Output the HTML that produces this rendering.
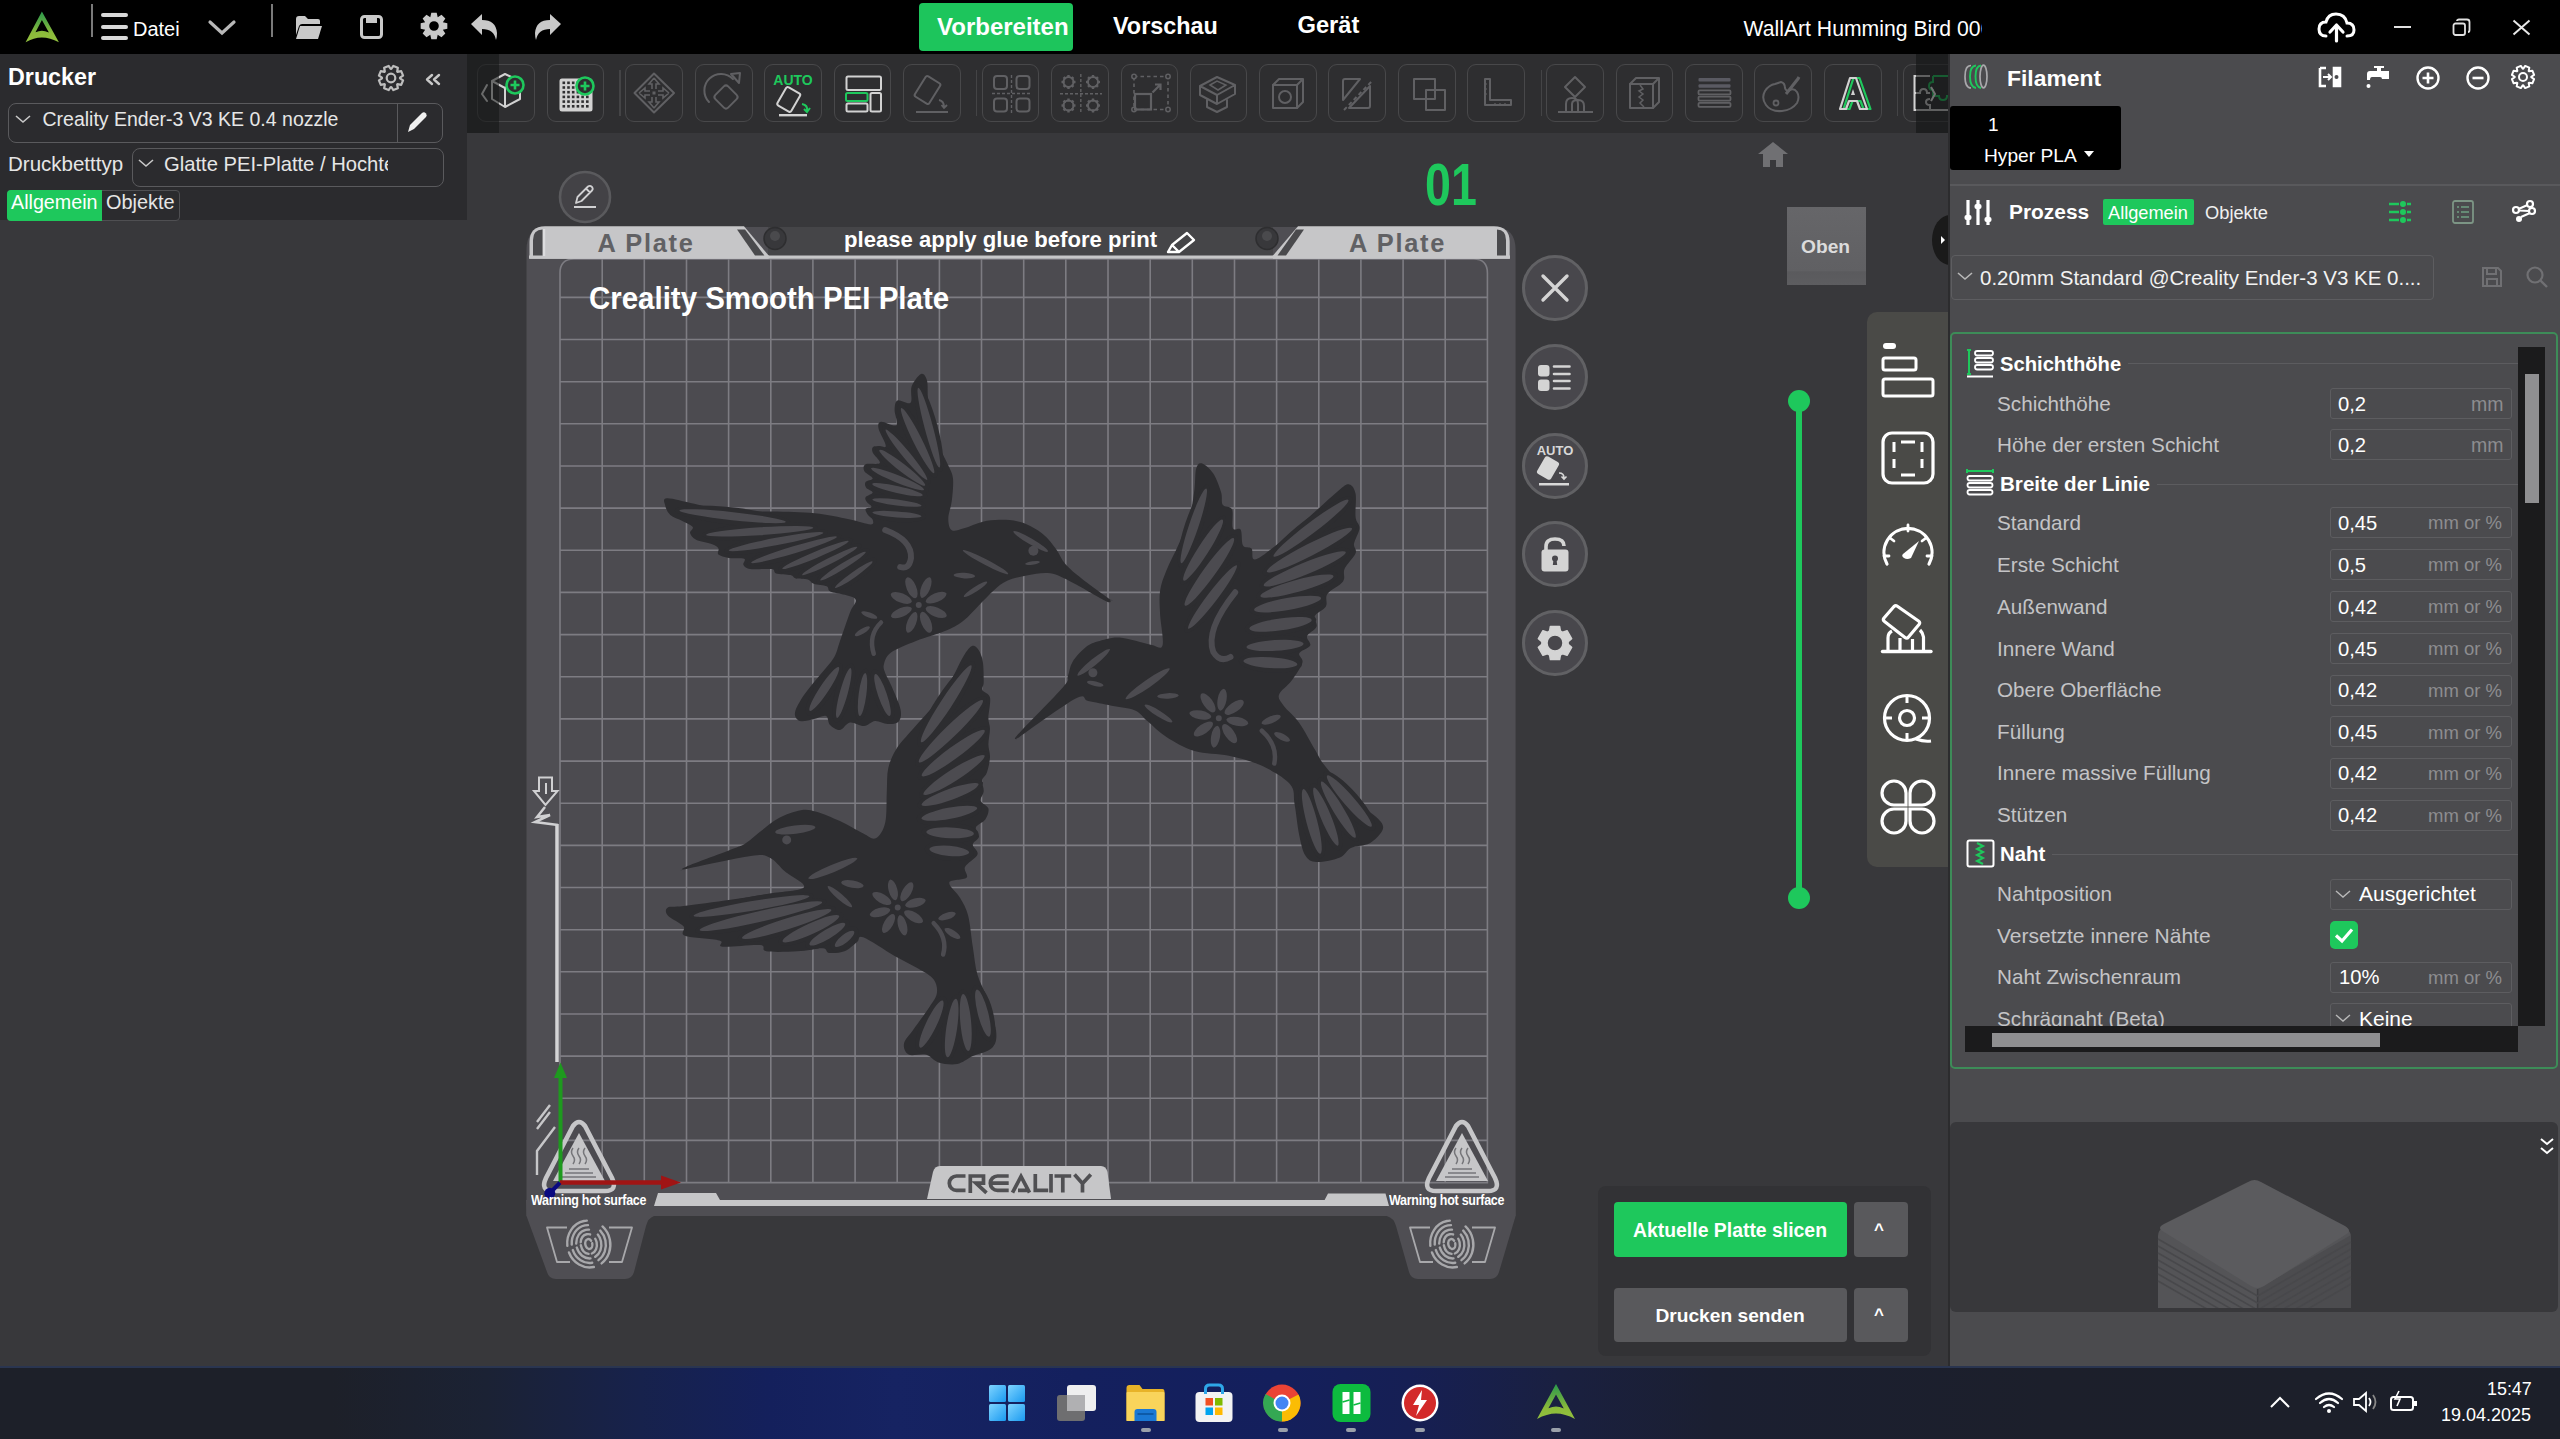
<!DOCTYPE html>
<html><head><meta charset="utf-8"><style>
html,body{margin:0;padding:0;width:2560px;height:1439px;overflow:hidden;background:#38383b;}
body{position:relative;font-family:"Liberation Sans",sans-serif;}
.t{position:absolute;white-space:nowrap;}
.r{position:absolute;box-sizing:border-box;}
.s{position:absolute;overflow:visible;}
</style></head><body>
<div class="r" style="left:0px;top:0px;width:2560px;height:54px;background:#000;"></div>
<div class="r" style="left:0px;top:54px;width:467px;height:166px;background:#2b2b2e;"></div>
<div class="r" style="left:467px;top:54px;width:1481px;height:79px;background:#2e2e30;"></div>
<div class="r" style="left:1948px;top:54px;width:612px;height:1312px;background:#4b4b4e;"></div>
<div class="r" style="left:0px;top:1366px;width:2560px;height:73px;background:linear-gradient(90deg,#1d2029 0%,#1d2029 13%,#1b2234 19%,#17224c 25%,#14205c 30%,#162362 35%,#14205e 42%,#141f5c 50%,#161f54 55%,#1a2040 61%,#1b1f31 67%,#1c1f2b 80%,#1c1f29 100%);"></div>
<div class="r" style="left:0px;top:1366px;width:2560px;height:2px;background:#2a3550;"></div>
<svg class="s" style="left:20px;top:8px;" width="44" height="38" viewBox="0 0 44 38"><defs><linearGradient id="lg1" x1="0" y1="0" x2="0" y2="1"><stop offset="0" stop-color="#2a9a4c"/><stop offset="0.35" stop-color="#5aa844"/><stop offset="0.7" stop-color="#8cbb3a"/><stop offset="1" stop-color="#92c03f"/></linearGradient></defs>
<path fill="url(#lg1)" fill-rule="evenodd" d="M21.9,3.5 L38.9,34.2 Q30,29.5 21.9,29.5 Q13.8,29.5 5.6,34.2 Z M21.9,12 L28.9,24.6 Q25,22.8 21.9,22.8 Q18.8,22.8 15.5,24.3 Z"/></svg>
<div class="r" style="left:91px;top:4px;width:2px;height:33px;background:#7a7a7a;"></div>
<div class="r" style="left:271px;top:4px;width:2px;height:33px;background:#7a7a7a;"></div>
<div class="r" style="left:101px;top:13px;width:27px;height:4px;background:#d8d8d8;border-radius:2px;"></div>
<div class="r" style="left:101px;top:25px;width:27px;height:4px;background:#d8d8d8;border-radius:2px;"></div>
<div class="r" style="left:101px;top:36px;width:27px;height:4px;background:#d8d8d8;border-radius:2px;"></div>
<div class="t" style="left:133.0px;top:19.1px;font-size:20px;line-height:20px;color:#fff;font-weight:400;">Datei</div>
<svg class="s" style="left:206px;top:18px;" width="32" height="18" viewBox="0 0 32 18"><path d="M4,4 L16,15 L28,4" fill="none" stroke="#b8b8b8" stroke-width="3.2" stroke-linecap="round"/></svg>
<svg class="s" style="left:293px;top:13px;" width="30" height="28" viewBox="0 0 30 28"><path d="M3,6 Q3,3 6,3 L12,3 L15,6 L25,6 Q27,6 27,8 L27,11 L9,11 Q7,11 6,13 L3,22 Z" fill="#c9c9c9"/><path d="M7,13 L29,13 L25,26 L3,26 Z" fill="#c9c9c9"/></svg>
<svg class="s" style="left:358px;top:13px;" width="27" height="28" viewBox="0 0 27 28"><rect x="3.5" y="3.5" width="20" height="21" rx="3" fill="none" stroke="#c9c9c9" stroke-width="3"/><rect x="8" y="3" width="11" height="7" fill="#c9c9c9"/></svg>
<svg class="s" style="left:420px;top:12px;" width="28" height="28" viewBox="0 0 28 28"><path fill="#c9c9c9" fill-rule="evenodd" d="M22.88,10.35 L27.33,11.30 L27.33,16.70 L22.88,17.65 L22.86,17.70 L25.34,21.51 L21.51,25.34 L17.70,22.86 L17.65,22.88 L16.70,27.33 L11.30,27.33 L10.35,22.88 L10.30,22.86 L6.49,25.34 L2.66,21.51 L5.14,17.70 L5.12,17.65 L0.67,16.70 L0.67,11.30 L5.12,10.35 L5.14,10.30 L2.66,6.49 L6.49,2.66 L10.30,5.14 L10.35,5.12 L11.30,0.67 L16.70,0.67 L17.65,5.12 L17.70,5.14 L21.51,2.66 L25.34,6.49 L22.86,10.30 Z M14,9.2 A4.8,4.8 0 1,0 14,18.8 A4.8,4.8 0 1,0 14,9.2 Z"/></svg>
<svg class="s" style="left:470px;top:13px;" width="28" height="28" viewBox="0 0 28 28"><path fill="#c9c9c9" d="M1,11 L12,1 L12,7 Q26,7 27,20 Q27,24 26,27 Q24,16 12,16 L12,22 Z"/></svg>
<svg class="s" style="left:534px;top:13px;" width="28" height="28" viewBox="0 0 28 28"><g transform="translate(28,0) scale(-1,1)"><path fill="#c9c9c9" d="M1,11 L12,1 L12,7 Q26,7 27,20 Q27,24 26,27 Q24,16 12,16 L12,22 Z"/></g></svg>
<div class="r" style="left:919px;top:3px;width:154px;height:48px;background:#1dc55c;border-radius:4px;"></div>
<div class="t" style="left:937.0px;top:14.9px;font-size:24px;line-height:24px;color:#fff;font-weight:700;">Vorbereiten</div>
<div class="t" style="left:1113.0px;top:15.2px;font-size:23.4px;line-height:23.4px;color:#fff;font-weight:700;">Vorschau</div>
<div class="t" style="left:1297.5px;top:14.1px;font-size:23.7px;line-height:23.7px;color:#fff;font-weight:700;">Gerät</div>
<div style="position:absolute;left:1743px;top:0;width:239px;height:54px;overflow:hidden"><div class="t" style="left:0.5px;top:17.6px;font-size:21.2px;line-height:21.2px;color:#fff;font-weight:400;">WallArt Humming Bird 006</div>
</div><svg class="s" style="left:2317px;top:11px;" width="39" height="31" viewBox="0 0 39 31"><path d="M9,25 Q2,25 2,18 Q2,11 9,11 Q11,3 19,3 Q28,3 30,12 Q37,12 37,19 Q37,25 30,25" fill="none" stroke="#fff" stroke-width="3" stroke-linecap="round"/><path d="M19.5,30 L19.5,15 M13,21 L19.5,14 L26,21" fill="none" stroke="#fff" stroke-width="3.2" stroke-linecap="round" stroke-linejoin="round"/></svg>
<div class="r" style="left:2394px;top:26px;width:17px;height:2px;background:#e0e0e0;"></div>
<svg class="s" style="left:2452px;top:18px;" width="19" height="19" viewBox="0 0 19 19"><rect x="1.5" y="5.5" width="11.5" height="11.5" rx="2" fill="none" stroke="#e0e0e0" stroke-width="1.8"/><path d="M5,3 Q5,1.5 7,1.5 L15,1.5 Q17.5,1.5 17.5,4 L17.5,12 Q17.5,14 16,14" fill="none" stroke="#e0e0e0" stroke-width="1.8"/></svg>
<svg class="s" style="left:2512px;top:19px;" width="19" height="17" viewBox="0 0 19 17"><path d="M1.5,1.5 L17.5,15.5 M17.5,1.5 L1.5,15.5" stroke="#e8e8e8" stroke-width="2"/></svg>
<div class="t" style="left:8.0px;top:66.3px;font-size:23.3px;line-height:23.3px;color:#fff;font-weight:700;">Drucker</div>
<svg class="s" style="left:378px;top:65px;" width="26" height="26" viewBox="0 0 26 26"><path d="M22.00,13.29 L25.07,15.36 L23.20,19.87 L19.57,19.15 L19.15,19.57 L19.87,23.20 L15.36,25.07 L13.29,22.00 L12.71,22.00 L10.64,25.07 L6.13,23.20 L6.85,19.57 L6.43,19.15 L2.80,19.87 L0.93,15.36 L4.00,13.29 L4.00,12.71 L0.93,10.64 L2.80,6.13 L6.43,6.85 L6.85,6.43 L6.13,2.80 L10.64,0.93 L12.71,4.00 L13.29,4.00 L15.36,0.93 L19.87,2.80 L19.15,6.43 L19.57,6.85 L23.20,6.13 L25.07,10.64 L22.00,12.71 Z" fill="none" stroke="#bdbdbd" stroke-width="2.2" stroke-linejoin="round"/><circle cx="13" cy="13" r="4.3" fill="none" stroke="#bdbdbd" stroke-width="2.2"/></svg>
<svg class="s" style="left:424px;top:73px;" width="19" height="13" viewBox="0 0 19 13"><path d="M8,2 L3,6.5 L8,11 M15,2 L10,6.5 L15,11" fill="none" stroke="#c8c8c8" stroke-width="2.4" stroke-linecap="round" stroke-linejoin="round"/></svg>
<div class="r" style="left:7.5px;top:102.5px;width:435.5px;height:40.0px;background:transparent;border:1px solid #5a5a5d;border-radius:8px;"></div>
<div class="r" style="left:397px;top:103px;width:1px;height:39px;background:#5a5a5d;"></div>
<svg class="s" style="left:14px;top:112px;" width="20" height="14" viewBox="0 0 20 14"><path d="M2,4 L9,10 L16,4" fill="none" stroke="#c8c8c8" stroke-width="1.6"/></svg>
<div class="t" style="left:42.5px;top:109.5px;font-size:19.5px;line-height:19.5px;color:#e6e6e6;font-weight:400;">Creality Ender-3 V3 KE 0.4 nozzle</div>
<svg class="s" style="left:404px;top:110px;" width="26" height="25" viewBox="0 0 26 25"><path d="M4,22 L6,15 L18,3 Q20,1.5 22,3.5 Q23.5,5.5 22,7 L10,19 Z" fill="#f0f0f0"/></svg>
<div class="t" style="left:8.0px;top:153.6px;font-size:20.5px;line-height:20.5px;color:#e6e6e6;font-weight:400;">Druckbetttyp</div>
<div class="r" style="left:132px;top:147.5px;width:311.5px;height:39.0px;background:transparent;border:1px solid #5a5a5d;border-radius:8px;"></div>
<svg class="s" style="left:137px;top:156px;" width="20" height="14" viewBox="0 0 20 14"><path d="M2,4 L9,10 L16,4" fill="none" stroke="#c8c8c8" stroke-width="1.6"/></svg>
<div style="position:absolute;left:164px;top:140px;width:224px;height:40px;overflow:hidden"><div class="t" style="left:0.0px;top:13.9px;font-size:20.2px;line-height:20.2px;color:#e6e6e6;font-weight:400;">Glatte PEI-Platte / Hochtemperatur</div>
</div><div class="r" style="left:7px;top:189.5px;width:173px;height:31.0px;background:transparent;border:1px solid #4f4f52;border-radius:4px;"></div>
<div class="r" style="left:7px;top:189.5px;width:95px;height:31.0px;background:#1ec85c;border-radius:4px 0 0 4px;"></div>
<div class="t" style="left:11.0px;top:193.3px;font-size:19.7px;line-height:19.7px;color:#fff;font-weight:400;">Allgemein</div>
<div class="t" style="left:106.0px;top:193.2px;font-size:19.9px;line-height:19.9px;color:#e6e6e6;font-weight:400;">Objekte</div>
<div style="position:absolute;left:0;top:0;width:1948px;height:1439px;overflow:hidden"><div class="r" style="left:477px;top:64px;width:57.5px;height:58px;border:1.5px solid #48484a;border-radius:9px;"></div>
<svg class="s" style="left:477px;top:64px;" width="58" height="58" viewBox="0 0 58 58"><path d="M15,17 L28,10 L43,17 L43,35 L28,43 L15,35 Z M15,17 L28,24 L43,17 M28,24 L28,43" stroke="#d2d2d2" fill="none" stroke-width="2" stroke-linejoin="round" stroke-linecap="round"/>
<path d="M10,21 L5,30 L10,37" stroke="#d2d2d2" fill="none" stroke-width="2" stroke-linejoin="round" stroke-linecap="round"/>
<circle cx="38" cy="21" r="8.5" fill="#2e2e30" stroke="#1ec85c" stroke-width="2.6"/><path d="M38,16.5 V25.5 M33.5,21 H42.5" stroke="#1ec85c" stroke-width="2.6"/></svg>
<div class="r" style="left:546.5px;top:64px;width:57.5px;height:58px;border:1.5px solid #48484a;border-radius:9px;"></div>
<svg class="s" style="left:546.5px;top:64px;" width="58.0" height="58" viewBox="0 0 58 58"><rect x="12.5" y="14.5" width="33" height="33" rx="2.5" fill="#d2d2d2"/><rect x="15.5" y="17.5" width="2.6" height="2.6" fill="#2e2e30"/><rect x="20.2" y="17.5" width="2.6" height="2.6" fill="#2e2e30"/><rect x="24.9" y="17.5" width="2.6" height="2.6" fill="#2e2e30"/><rect x="29.6" y="17.5" width="2.6" height="2.6" fill="#2e2e30"/><rect x="34.3" y="17.5" width="2.6" height="2.6" fill="#2e2e30"/><rect x="39.0" y="17.5" width="2.6" height="2.6" fill="#2e2e30"/><rect x="15.5" y="22.2" width="2.6" height="2.6" fill="#2e2e30"/><rect x="20.2" y="22.2" width="2.6" height="2.6" fill="#2e2e30"/><rect x="24.9" y="22.2" width="2.6" height="2.6" fill="#2e2e30"/><rect x="29.6" y="22.2" width="2.6" height="2.6" fill="#2e2e30"/><rect x="34.3" y="22.2" width="2.6" height="2.6" fill="#2e2e30"/><rect x="39.0" y="22.2" width="2.6" height="2.6" fill="#2e2e30"/><rect x="15.5" y="26.9" width="2.6" height="2.6" fill="#2e2e30"/><rect x="20.2" y="26.9" width="2.6" height="2.6" fill="#2e2e30"/><rect x="24.9" y="26.9" width="2.6" height="2.6" fill="#2e2e30"/><rect x="29.6" y="26.9" width="2.6" height="2.6" fill="#2e2e30"/><rect x="34.3" y="26.9" width="2.6" height="2.6" fill="#2e2e30"/><rect x="39.0" y="26.9" width="2.6" height="2.6" fill="#2e2e30"/><rect x="15.5" y="31.6" width="2.6" height="2.6" fill="#2e2e30"/><rect x="20.2" y="31.6" width="2.6" height="2.6" fill="#2e2e30"/><rect x="24.9" y="31.6" width="2.6" height="2.6" fill="#2e2e30"/><rect x="29.6" y="31.6" width="2.6" height="2.6" fill="#2e2e30"/><rect x="34.3" y="31.6" width="2.6" height="2.6" fill="#2e2e30"/><rect x="39.0" y="31.6" width="2.6" height="2.6" fill="#2e2e30"/><rect x="15.5" y="36.3" width="2.6" height="2.6" fill="#2e2e30"/><rect x="20.2" y="36.3" width="2.6" height="2.6" fill="#2e2e30"/><rect x="24.9" y="36.3" width="2.6" height="2.6" fill="#2e2e30"/><rect x="29.6" y="36.3" width="2.6" height="2.6" fill="#2e2e30"/><rect x="34.3" y="36.3" width="2.6" height="2.6" fill="#2e2e30"/><rect x="39.0" y="36.3" width="2.6" height="2.6" fill="#2e2e30"/><rect x="15.5" y="41.0" width="2.6" height="2.6" fill="#2e2e30"/><rect x="20.2" y="41.0" width="2.6" height="2.6" fill="#2e2e30"/><rect x="24.9" y="41.0" width="2.6" height="2.6" fill="#2e2e30"/><rect x="29.6" y="41.0" width="2.6" height="2.6" fill="#2e2e30"/><rect x="34.3" y="41.0" width="2.6" height="2.6" fill="#2e2e30"/><rect x="39.0" y="41.0" width="2.6" height="2.6" fill="#2e2e30"/>
<circle cx="38" cy="22" r="8.5" fill="#2e2e30" stroke="#1ec85c" stroke-width="2.6"/><path d="M38,17.5 V26.5 M33.5,22 H42.5" stroke="#1ec85c" stroke-width="2.6"/></svg>
<div class="r" style="left:625px;top:64px;width:57.5px;height:58px;border:1.5px solid #48484a;border-radius:9px;"></div>
<svg class="s" style="left:625px;top:64px;" width="58" height="58" viewBox="0 0 58 58"><path d="M29,9.5 L49,29 L29,48.5 L9.5,29 Z" stroke="#606063" fill="none" stroke-width="2" stroke-linejoin="round" stroke-linecap="round"/>
<path d="M29,14 L24,20 H27 V25 M29,14 L34,20 H31 V25 M29,44 L24,38 H27 V33 M29,44 L34,38 H31 V33 M14,29 L20,24 V27 H25 M14,29 L20,34 V31 H25 M44,29 L38,24 V27 H33 M44,29 L38,34 V31 H33" stroke="#606063" stroke-width="1.6" fill="none"/>
<rect x="27.5" y="27.5" width="3" height="3" fill="#606063"/></svg>
<div class="r" style="left:695px;top:64px;width:57.5px;height:58px;border:1.5px solid #48484a;border-radius:9px;"></div>
<svg class="s" style="left:695px;top:64px;" width="58" height="58" viewBox="0 0 58 58"><path d="M14,38 A16,16 0 0,1 38,15" stroke="#606063" fill="none" stroke-width="2" stroke-linejoin="round" stroke-linecap="round"/><path d="M36,10 L45,9 L44,19 Z" stroke="#606063" fill="none" stroke-width="2" stroke-linejoin="round" stroke-linecap="round"/>
<rect x="22" y="24" width="18" height="18" rx="3" transform="rotate(45 31 33)" stroke="#606063" fill="none" stroke-width="2" stroke-linejoin="round" stroke-linecap="round"/></svg>
<div class="r" style="left:764px;top:64px;width:57.5px;height:58px;border:1.5px solid #48484a;border-radius:9px;"></div>
<svg class="s" style="left:764px;top:64px;" width="58" height="58" viewBox="0 0 58 58"><text x="29" y="21" text-anchor="middle" font-family="Liberation Sans" font-weight="700" font-size="14" fill="#1ec85c">AUTO</text>
<rect x="17" y="25" width="16" height="21" rx="2" transform="rotate(30 25 35)" stroke="#d2d2d2" fill="none" stroke-width="2" stroke-linejoin="round" stroke-linecap="round"/>
<path d="M38,40 Q44,41 43,47 M40,45 L43,48 L46,44" stroke="#1ec85c" stroke-width="2" fill="none"/>
<rect x="15" y="50" width="28" height="2.4" fill="#d2d2d2"/></svg>
<div class="r" style="left:833.5px;top:64px;width:57.5px;height:58px;border:1.5px solid #48484a;border-radius:9px;"></div>
<svg class="s" style="left:833.5px;top:64px;" width="58.0" height="58" viewBox="0 0 58 58"><rect x="12.5" y="12.5" width="34.5" height="13.5" rx="1.5" stroke="#d2d2d2" fill="none" stroke-width="2" stroke-linejoin="round" stroke-linecap="round" stroke-width="2.4"/>
<rect x="12" y="29" width="21.5" height="8" rx="1.5" stroke="#1ec85c" fill="none" stroke-width="2" stroke-linejoin="round" stroke-linecap="round" stroke-width="2.4"/>
<rect x="12.5" y="39.5" width="21" height="8" rx="1.5" stroke="#d2d2d2" fill="none" stroke-width="2" stroke-linejoin="round" stroke-linecap="round" stroke-width="2.4"/>
<rect x="36.5" y="29" width="10.5" height="18.5" rx="1.5" stroke="#d2d2d2" fill="none" stroke-width="2" stroke-linejoin="round" stroke-linecap="round" stroke-width="2.4"/></svg>
<div class="r" style="left:903px;top:64px;width:57.5px;height:58px;border:1.5px solid #48484a;border-radius:9px;"></div>
<svg class="s" style="left:903px;top:64px;" width="58" height="58" viewBox="0 0 58 58"><rect x="16" y="14" width="17" height="24" rx="2" transform="rotate(32 24.5 26)" stroke="#606063" fill="none" stroke-width="2" stroke-linejoin="round" stroke-linecap="round"/>
<path d="M36,36 Q41,37 41,43 M38.5,41 L41,44 L44,41" stroke="#606063" stroke-width="1.8" fill="none"/>
<path d="M13,48 H45" stroke="#606063" stroke-width="2"/></svg>
<div class="r" style="left:981.5px;top:64px;width:57.5px;height:58px;border:1.5px solid #48484a;border-radius:9px;"></div>
<svg class="s" style="left:981.5px;top:64px;" width="58.0" height="58" viewBox="0 0 58 58"><rect x="12" y="12" width="13" height="13" rx="3" stroke="#606063" fill="none" stroke-width="2" stroke-linejoin="round" stroke-linecap="round"/><rect x="34.5" y="12" width="13" height="13" rx="3" stroke="#606063" fill="none" stroke-width="2" stroke-linejoin="round" stroke-linecap="round"/>
<rect x="12" y="34.5" width="13" height="13" rx="3" stroke="#606063" fill="none" stroke-width="2" stroke-linejoin="round" stroke-linecap="round"/><rect x="34.5" y="34.5" width="13" height="13" rx="3" stroke="#606063" fill="none" stroke-width="2" stroke-linejoin="round" stroke-linecap="round"/>
<path d="M29.5,11 V49 M10,29.5 H49" stroke="#606063" stroke-width="1.4" stroke-dasharray="3 2"/></svg>
<div class="r" style="left:1051px;top:64px;width:57.5px;height:58px;border:1.5px solid #48484a;border-radius:9px;"></div>
<svg class="s" style="left:1051px;top:64px;" width="58" height="58" viewBox="0 0 58 58"><rect x="16.3" y="11.0" width="2.4" height="3" fill="#606063" transform="rotate(0 17.5 18)"/><rect x="16.3" y="11.0" width="2.4" height="3" fill="#606063" transform="rotate(45 17.5 18)"/><rect x="16.3" y="11.0" width="2.4" height="3" fill="#606063" transform="rotate(90 17.5 18)"/><rect x="16.3" y="11.0" width="2.4" height="3" fill="#606063" transform="rotate(135 17.5 18)"/><rect x="16.3" y="11.0" width="2.4" height="3" fill="#606063" transform="rotate(180 17.5 18)"/><rect x="16.3" y="11.0" width="2.4" height="3" fill="#606063" transform="rotate(225 17.5 18)"/><rect x="16.3" y="11.0" width="2.4" height="3" fill="#606063" transform="rotate(270 17.5 18)"/><rect x="16.3" y="11.0" width="2.4" height="3" fill="#606063" transform="rotate(315 17.5 18)"/><circle cx="17.5" cy="18" r="5.0" stroke="#606063" stroke-width="2" fill="none"/><rect x="40.8" y="11.0" width="2.4" height="3" fill="#606063" transform="rotate(0 42 18)"/><rect x="40.8" y="11.0" width="2.4" height="3" fill="#606063" transform="rotate(45 42 18)"/><rect x="40.8" y="11.0" width="2.4" height="3" fill="#606063" transform="rotate(90 42 18)"/><rect x="40.8" y="11.0" width="2.4" height="3" fill="#606063" transform="rotate(135 42 18)"/><rect x="40.8" y="11.0" width="2.4" height="3" fill="#606063" transform="rotate(180 42 18)"/><rect x="40.8" y="11.0" width="2.4" height="3" fill="#606063" transform="rotate(225 42 18)"/><rect x="40.8" y="11.0" width="2.4" height="3" fill="#606063" transform="rotate(270 42 18)"/><rect x="40.8" y="11.0" width="2.4" height="3" fill="#606063" transform="rotate(315 42 18)"/><circle cx="42" cy="18" r="5.0" stroke="#606063" stroke-width="2" fill="none"/><rect x="16.3" y="34.5" width="2.4" height="3" fill="#606063" transform="rotate(0 17.5 41.5)"/><rect x="16.3" y="34.5" width="2.4" height="3" fill="#606063" transform="rotate(45 17.5 41.5)"/><rect x="16.3" y="34.5" width="2.4" height="3" fill="#606063" transform="rotate(90 17.5 41.5)"/><rect x="16.3" y="34.5" width="2.4" height="3" fill="#606063" transform="rotate(135 17.5 41.5)"/><rect x="16.3" y="34.5" width="2.4" height="3" fill="#606063" transform="rotate(180 17.5 41.5)"/><rect x="16.3" y="34.5" width="2.4" height="3" fill="#606063" transform="rotate(225 17.5 41.5)"/><rect x="16.3" y="34.5" width="2.4" height="3" fill="#606063" transform="rotate(270 17.5 41.5)"/><rect x="16.3" y="34.5" width="2.4" height="3" fill="#606063" transform="rotate(315 17.5 41.5)"/><circle cx="17.5" cy="41.5" r="5.0" stroke="#606063" stroke-width="2" fill="none"/><rect x="40.8" y="34.5" width="2.4" height="3" fill="#606063" transform="rotate(0 42 41.5)"/><rect x="40.8" y="34.5" width="2.4" height="3" fill="#606063" transform="rotate(45 42 41.5)"/><rect x="40.8" y="34.5" width="2.4" height="3" fill="#606063" transform="rotate(90 42 41.5)"/><rect x="40.8" y="34.5" width="2.4" height="3" fill="#606063" transform="rotate(135 42 41.5)"/><rect x="40.8" y="34.5" width="2.4" height="3" fill="#606063" transform="rotate(180 42 41.5)"/><rect x="40.8" y="34.5" width="2.4" height="3" fill="#606063" transform="rotate(225 42 41.5)"/><rect x="40.8" y="34.5" width="2.4" height="3" fill="#606063" transform="rotate(270 42 41.5)"/><rect x="40.8" y="34.5" width="2.4" height="3" fill="#606063" transform="rotate(315 42 41.5)"/><circle cx="42" cy="41.5" r="5.0" stroke="#606063" stroke-width="2" fill="none"/><path d="M29.8,10 V50 M9,29.8 H51" stroke="#606063" stroke-width="1.4" stroke-dasharray="3 2"/></svg>
<div class="r" style="left:1120.5px;top:64px;width:57.5px;height:58px;border:1.5px solid #48484a;border-radius:9px;"></div>
<svg class="s" style="left:1120.5px;top:64px;" width="58.0" height="58" viewBox="0 0 58 58"><path d="M13,12.5 H47 V45.5 H13 Z" stroke="#606063" stroke-width="1.6" stroke-dasharray="3.5 3" fill="none"/>
<circle cx="13" cy="12.5" r="2.2" stroke="#606063" stroke-width="1.5" fill="#2e2e30"/><circle cx="47" cy="12.5" r="2.2" stroke="#606063" stroke-width="1.5" fill="#2e2e30"/><circle cx="13" cy="45.5" r="2.2" stroke="#606063" stroke-width="1.5" fill="#2e2e30"/><circle cx="47" cy="45.5" r="2.2" stroke="#606063" stroke-width="1.5" fill="#2e2e30"/>
<rect x="14" y="30" width="16" height="15.5" stroke="#606063" stroke-width="2.2" fill="none"/><path d="M31.5,28.5 L39.5,20.5 M34,20.5 H39.5 V26" stroke="#606063" stroke-width="2.2" fill="none"/></svg>
<div class="r" style="left:1189.6px;top:64px;width:57.5px;height:58px;border:1.5px solid #48484a;border-radius:9px;"></div>
<svg class="s" style="left:1189.6px;top:64px;" width="58.0" height="58" viewBox="0 0 58 58"><path d="M10,22 L27,13 L45,21 L45,30 L27,40 L10,31 Z M10,22 L27,31 L45,21 M27,31 V40" stroke="#606063" fill="none" stroke-width="2" stroke-linejoin="round" stroke-linecap="round"/>
<path d="M20,21 L27,17 L36,21 L28,26 Z" stroke="#606063" stroke-width="1.5" fill="none"/><path d="M17,36 V43 L27,48 L37,43 V36" stroke="#606063" fill="none" stroke-width="2" stroke-linejoin="round" stroke-linecap="round"/></svg>
<div class="r" style="left:1259px;top:64px;width:57.5px;height:58px;border:1.5px solid #48484a;border-radius:9px;"></div>
<svg class="s" style="left:1259px;top:64px;" width="58" height="58" viewBox="0 0 58 58"><path d="M14,21 L20,15 H44 L38,21 Z M38,21 V44 L44,38 V15" stroke="#606063" fill="none" stroke-width="2" stroke-linejoin="round" stroke-linecap="round"/><rect x="14" y="21" width="24" height="23" stroke="#606063" fill="none" stroke-width="2" stroke-linejoin="round" stroke-linecap="round"/><circle cx="26" cy="33" r="6" stroke="#606063" stroke-width="2" fill="none"/></svg>
<div class="r" style="left:1328px;top:64px;width:57.5px;height:58px;border:1.5px solid #48484a;border-radius:9px;"></div>
<svg class="s" style="left:1328px;top:64px;" width="58" height="58" viewBox="0 0 58 58"><path d="M32,15 H17 Q15,15 15,17 V36 Z M42,22 V42 Q42,44 40,44 H21 Z" stroke="#606063" fill="none" stroke-width="2" stroke-linejoin="round" stroke-linecap="round"/><path d="M16,46 L45,16" stroke="#606063" stroke-width="2" stroke-dasharray="4 3"/></svg>
<div class="r" style="left:1398px;top:64px;width:57.5px;height:58px;border:1.5px solid #48484a;border-radius:9px;"></div>
<svg class="s" style="left:1398px;top:64px;" width="58" height="58" viewBox="0 0 58 58"><rect x="16" y="15" width="21" height="20" stroke="#606063" fill="none" stroke-width="2" stroke-linejoin="round" stroke-linecap="round"/><rect x="28" y="26" width="19" height="20" stroke="#606063" fill="none" stroke-width="2" stroke-linejoin="round" stroke-linecap="round"/></svg>
<div class="r" style="left:1467px;top:64px;width:57.5px;height:58px;border:1.5px solid #48484a;border-radius:9px;"></div>
<svg class="s" style="left:1467px;top:64px;" width="58" height="58" viewBox="0 0 58 58"><path d="M18,15 H23 V36 H44 V41 H18 Z" stroke="#606063" fill="none" stroke-width="2" stroke-linejoin="round" stroke-linecap="round"/><path d="M18,20 H20 M18,25 H20 M18,30 H20 M28,41 V39 M33,41 V39 M38,41 V39" stroke="#606063" stroke-width="1.2"/></svg>
<div class="r" style="left:1546px;top:64px;width:57.5px;height:58px;border:1.5px solid #48484a;border-radius:9px;"></div>
<svg class="s" style="left:1546px;top:64px;" width="58" height="58" viewBox="0 0 58 58"><path d="M29,13 L39,23 L29,33 L19,23 Z" stroke="#606063" fill="none" stroke-width="2" stroke-linejoin="round" stroke-linecap="round"/><path d="M20,48 V40 Q20,34 26,34 Q32,34 32,40 V48 M26,48 V40 Q26,36 32,36 Q38,36 38,42 V48" stroke="#606063" stroke-width="2" fill="none"/><path d="M12,48 H47" stroke="#606063" stroke-width="1.8"/></svg>
<div class="r" style="left:1615.5px;top:64px;width:57.5px;height:58px;border:1.5px solid #48484a;border-radius:9px;"></div>
<svg class="s" style="left:1615.5px;top:64px;" width="58.0" height="58" viewBox="0 0 58 58"><path d="M14,20 L20,14 H43 L37,20 Z M37,20 V44 L43,38 V14" stroke="#606063" fill="none" stroke-width="2" stroke-linejoin="round" stroke-linecap="round"/><rect x="14" y="20" width="23" height="24" stroke="#606063" fill="none" stroke-width="2" stroke-linejoin="round" stroke-linecap="round"/><path d="M24,21 L27,25 L23,27 L27,30 L23,33 L27,36 L24,39 L28,43" stroke="#606063" stroke-width="1.5" fill="none"/></svg>
<div class="r" style="left:1685px;top:64px;width:57.5px;height:58px;border:1.5px solid #48484a;border-radius:9px;"></div>
<svg class="s" style="left:1685px;top:64px;" width="58" height="58" viewBox="0 0 58 58"><rect x="13.5" y="14.0" width="32" height="3.5" rx="1" stroke="#606063" stroke-width="0" fill="#5a5a62"/><rect x="13.5" y="20.2" width="32" height="3.5" rx="1" stroke="#606063" stroke-width="0" fill="#5a5a62"/><rect x="13.5" y="26.4" width="32" height="4" rx="1" stroke="#606063" stroke-width="1.8" fill="none"/><rect x="13.5" y="32.6" width="32" height="4" rx="1" stroke="#606063" stroke-width="1.8" fill="none"/><rect x="13.5" y="38.8" width="32" height="4" rx="1" stroke="#606063" stroke-width="1.8" fill="none"/></svg>
<div class="r" style="left:1754px;top:64px;width:57.5px;height:58px;border:1.5px solid #48484a;border-radius:9px;"></div>
<svg class="s" style="left:1754px;top:64px;" width="58" height="58" viewBox="0 0 58 58"><path d="M21,20 Q15,21 11,27 Q7,34 12,41 Q17,48 28,47 Q38,46 43,39 Q46,33 43,28 Q40,24 36,26 Q32,28 31,24 Q31,19 27,18 Z" stroke="#606063" fill="none" stroke-width="2" stroke-linejoin="round" stroke-linecap="round"/><circle cx="22" cy="39" r="2.5" stroke="#606063" stroke-width="1.8" fill="none"/><path d="M32,30 L44,15 L45,13 L43,16 Z" stroke="#606063" stroke-width="3" fill="none"/></svg>
<div class="r" style="left:1824px;top:64px;width:57.5px;height:58px;border:1.5px solid #48484a;border-radius:9px;"></div>
<svg class="s" style="left:1824px;top:64px;" width="58" height="58" viewBox="0 0 58 58"><path d="M18,45 L28,14 H34 L45,45 H38 L35,37 H27 L24,45 Z" stroke="#1ec85c" stroke-width="2.2" fill="none" stroke-linejoin="round" transform="translate(1.5,0)"/>
<path d="M16,45 L26,14 H32 L43,45 H36 L33,37 H25 L22,45 Z" stroke="#d2d2d2" stroke-width="2.2" fill="none" stroke-linejoin="round"/><path d="M27,31 L29,25 L31,31 Z" fill="#d2d2d2"/></svg>
<div class="r" style="left:1903px;top:64px;width:57.5px;height:58px;border:1.5px solid #48484a;border-radius:9px;"></div>
<svg class="s" style="left:1903px;top:64px;" width="58" height="58" viewBox="0 0 58 58"><path d="M27,12 H11.5 V46 H45 " stroke="#d2d2d2" stroke-width="2" fill="none"/><path d="M11.5,29 H17 Q17,25 20.5,25 Q24,25 24,29 H27" stroke="#d2d2d2" stroke-width="2" fill="none"/><path d="M27,46 V41 Q23,41 23,38 Q23,35 27,35" stroke="#d2d2d2" stroke-width="2" fill="none"/>
<path d="M30,12 H48 M30,12 V18 Q26,18 26,22 Q26,26 30,26 V32 H36 Q36,36 40,36 Q44,36 44,32 H48" stroke="#1ec85c" stroke-width="2" fill="none"/><path d="M28,23 L32,30 L28,37" stroke="#fff" stroke-width="2" fill="none"/></svg>
<div class="r" style="left:619.0px;top:70px;width:1.5px;height:46px;background:#444446;"></div>
<div class="r" style="left:975.5px;top:70px;width:1.5px;height:46px;background:#444446;"></div>
<div class="r" style="left:1540.5px;top:70px;width:1.5px;height:46px;background:#444446;"></div>
<div class="r" style="left:1896.5px;top:70px;width:1.5px;height:46px;background:#444446;"></div>
<div class="r" style="left:467px;top:54px;width:32px;height:79px;background:rgba(20,22,22,0.55);"></div>
<div class="r" style="left:1916px;top:54px;width:32px;height:79px;background:rgba(18,20,20,0.6);"></div>
</div>
<svg class="s" style="left:0;top:0" width="2560" height="1439" viewBox="0 0 2560 1439"><path d="M526.5,250 Q526.5,227 548,227 L1494,227 Q1515.6,227 1515.6,250 L1515.6,1216 L526.5,1216 Z" fill="#4f4e53"/><path d="M768,227 L1273,227 L1273,256 L768,256 Z" fill="#454548"/><path d="M526,1200 L654,1200 L654,1216 Q648,1218 646,1226 L634,1272 Q632,1279 625,1279 L556,1279 Q549,1279 547,1272 L526.5,1216 Z" fill="#4f4e53"/><path d="M1386.7,1200 L1515.6,1200 L1515.6,1216 L1499,1272 Q1497,1279 1490,1279 L1418,1279 Q1411,1279 1409,1272 L1396,1226 Q1394,1218 1386.7,1216 Z" fill="#4f4e53"/><path d="M560,273 Q560,259 574,259 L1473.4,259 Q1487.4,259 1487.4,273 L1487.4,1182.6 L560,1182.6 Z" fill="#4c4b50" stroke="#7d7c82" stroke-width="1.6"/><path d="M602.2,259 V1182.6 M560,1140.4 H1487.4 M644.3,259 V1182.6 M560,1098.3 H1487.4 M686.5,259 V1182.6 M560,1056.1 H1487.4 M728.6,259 V1182.6 M560,1014.0 H1487.4 M770.8,259 V1182.6 M560,971.8 H1487.4 M812.9,259 V1182.6 M560,929.7 H1487.4 M855.1,259 V1182.6 M560,887.5 H1487.4 M897.2,259 V1182.6 M560,845.4 H1487.4 M939.4,259 V1182.6 M560,803.2 H1487.4 M981.5,259 V1182.6 M560,761.1 H1487.4 M1023.7,259 V1182.6 M560,718.9 H1487.4 M1065.8,259 V1182.6 M560,676.8 H1487.4 M1108.0,259 V1182.6 M560,634.6 H1487.4 M1150.2,259 V1182.6 M560,592.4 H1487.4 M1192.3,259 V1182.6 M560,550.3 H1487.4 M1234.5,259 V1182.6 M560,508.1 H1487.4 M1276.6,259 V1182.6 M560,466.0 H1487.4 M1318.8,259 V1182.6 M560,423.8 H1487.4 M1360.9,259 V1182.6 M560,381.7 H1487.4 M1403.1,259 V1182.6 M560,339.5 H1487.4 M1445.2,259 V1182.6 M560,297.4 H1487.4 " stroke="#7d7c82" stroke-width="1.6" fill="none"/><rect x="529" y="255.5" width="981" height="3.2" fill="#c6c6c8"/><path d="M529.5,258.7 L529.5,242 Q529.5,226.3 545,226.3 L744,226.3 L768.7,255.6 L768.7,258.7 Z" fill="#c6c6c8"/><path d="M533,255.6 L533,240 Q533,229.4 542.5,229.4 L542.5,255.6 Z" fill="#4a4a4d"/><rect x="543" y="229" width="2.2" height="27" fill="#dcdcde"/><path d="M737,229.4 L745,229.4 L764.4,255.6 L755,255.6 Z" fill="#4a4a4d"/><path d="M1509.7,258.7 L1509.7,242 Q1509.7,226.3 1494,226.3 L1298,226.3 L1273,255.6 L1273,258.7 Z" fill="#c6c6c8"/><path d="M1506,255.6 L1506,240 Q1506,229.4 1497,229.4 L1497,255.6 Z" fill="#4a4a4d"/><path d="M1304,229.4 L1296,229.4 L1277.5,255.6 L1286,255.6 Z" fill="#4a4a4d"/><circle cx="775" cy="238.5" r="11" fill="#38383b" stroke="#2e2e30" stroke-width="1.5"/><circle cx="775" cy="236" r="5" fill="#4a4a4d"/><circle cx="1267" cy="238.5" r="11" fill="#38383b" stroke="#2e2e30" stroke-width="1.5"/><circle cx="1267" cy="236" r="5" fill="#4a4a4d"/><path d="M1172,245 L1187,233 L1194,240 L1179,252 L1168,252 Z M1172,245 L1179,252" fill="none" stroke="#fff" stroke-width="2.4" stroke-linejoin="round"/><path d="M654,1206 L658,1193 L716,1193 L720,1200 L1324.6,1200 L1328,1193.5 L1385.5,1193.5 L1389,1206 Z" fill="#c6c6c8"/><path d="M927,1199 L933,1172 Q934.5,1166 940,1166 L1101,1166 Q1106,1166 1107.5,1172 L1111,1199 Z" fill="#c6c6c8"/><path d="M573,1126 Q579,1118 585,1126 L612,1178 Q618,1191 605,1191 L553,1191 Q540,1191 546,1178 Z" fill="none" stroke="#c6c6c8" stroke-width="4.6"/><path d="M579,1133 L605,1181 L553,1181 Z" fill="#c6c6c8"/><path d="M573,1148 q-3,4 0,8 q3,4 0,8 M579,1148 q-3,4 0,8 q3,4 0,8 M585,1148 q-3,4 0,8 q3,4 0,8 M569,1169 H589 M565,1173 H593 M562,1177 H596" stroke="#76767a" stroke-width="1.5" fill="none"/><path d="M1456,1126 Q1462,1118 1468,1126 L1495,1178 Q1501,1191 1488,1191 L1436,1191 Q1423,1191 1429,1178 Z" fill="none" stroke="#c6c6c8" stroke-width="4.6"/><path d="M1462,1133 L1488,1181 L1436,1181 Z" fill="#c6c6c8"/><path d="M1456,1148 q-3,4 0,8 q3,4 0,8 M1462,1148 q-3,4 0,8 q3,4 0,8 M1468,1148 q-3,4 0,8 q3,4 0,8 M1452,1169 H1472 M1448,1173 H1476 M1445,1177 H1479" stroke="#76767a" stroke-width="1.5" fill="none"/><path d="M550,1105 L537,1122 M550,1112 L537,1129 M555,1127 L537,1151 L537,1175" stroke="#c6c6c8" stroke-width="2.4" fill="none"/><path d="M567,1227.5 L547,1227.5 L557,1262 L570,1262 M609,1227.5 L632,1227.5 L622,1262 L609,1262" stroke="#a8a8ab" stroke-width="1.8" fill="none" stroke-linejoin="round"/><ellipse cx="589" cy="1244" rx="3.5" ry="5" transform="rotate(-12 589 1245)" stroke="#a8a8ab" stroke-width="2.4" fill="none" stroke-dasharray="8.0 1.6 5.9 1.3 6.7 3.2" stroke-dashoffset="0" stroke-linecap="round"/><ellipse cx="589" cy="1244" rx="8" ry="10" transform="rotate(-12 589 1245)" stroke="#a8a8ab" stroke-width="2.4" fill="none" stroke-dasharray="17.0 3.4 12.4 2.8 14.1 6.8" stroke-dashoffset="4" stroke-linecap="round"/><ellipse cx="589" cy="1244" rx="12.5" ry="14.5" transform="rotate(-12 589 1245)" stroke="#a8a8ab" stroke-width="2.4" fill="none" stroke-dasharray="25.4 5.1 18.7 4.2 21.2 10.2" stroke-dashoffset="8" stroke-linecap="round"/><ellipse cx="589" cy="1244" rx="17" ry="19" transform="rotate(-12 589 1245)" stroke="#a8a8ab" stroke-width="2.4" fill="none" stroke-dasharray="33.9 6.8 24.9 5.7 28.3 13.6" stroke-dashoffset="12" stroke-linecap="round"/><ellipse cx="589" cy="1244" rx="21.5" ry="23.5" transform="rotate(-12 589 1245)" stroke="#a8a8ab" stroke-width="2.4" fill="none" stroke-dasharray="42.4 8.5 31.1 7.1 35.3 17.0" stroke-dashoffset="16" stroke-linecap="round"/><path d="M1430,1227.5 L1410,1227.5 L1420,1262 L1433,1262 M1472,1227.5 L1495,1227.5 L1485,1262 L1472,1262" stroke="#a8a8ab" stroke-width="1.8" fill="none" stroke-linejoin="round"/><ellipse cx="1452" cy="1244" rx="3.5" ry="5" transform="rotate(-12 1452 1245)" stroke="#a8a8ab" stroke-width="2.4" fill="none" stroke-dasharray="8.0 1.6 5.9 1.3 6.7 3.2" stroke-dashoffset="0" stroke-linecap="round"/><ellipse cx="1452" cy="1244" rx="8" ry="10" transform="rotate(-12 1452 1245)" stroke="#a8a8ab" stroke-width="2.4" fill="none" stroke-dasharray="17.0 3.4 12.4 2.8 14.1 6.8" stroke-dashoffset="4" stroke-linecap="round"/><ellipse cx="1452" cy="1244" rx="12.5" ry="14.5" transform="rotate(-12 1452 1245)" stroke="#a8a8ab" stroke-width="2.4" fill="none" stroke-dasharray="25.4 5.1 18.7 4.2 21.2 10.2" stroke-dashoffset="8" stroke-linecap="round"/><ellipse cx="1452" cy="1244" rx="17" ry="19" transform="rotate(-12 1452 1245)" stroke="#a8a8ab" stroke-width="2.4" fill="none" stroke-dasharray="33.9 6.8 24.9 5.7 28.3 13.6" stroke-dashoffset="12" stroke-linecap="round"/><ellipse cx="1452" cy="1244" rx="21.5" ry="23.5" transform="rotate(-12 1452 1245)" stroke="#a8a8ab" stroke-width="2.4" fill="none" stroke-dasharray="42.4 8.5 31.1 7.1 35.3 17.0" stroke-dashoffset="16" stroke-linecap="round"/><path d="M557,824 V1062" stroke="#d4d4d6" stroke-width="3.5"/><path d="M539,777.5 H552 V791 H557.5 L545.5,805 L534,791 H539 Z" fill="none" stroke="#d0d0d2" stroke-width="2"/><path d="M546,783 V794" stroke="#d0d0d2" stroke-width="2"/><path d="M545,807 L537,817 L550,815 L535,822 L558,825" stroke="#d0d0d2" stroke-width="2.5" fill="none"/><path d="M560.5,1182.6 V1075" stroke="#1e9a1e" stroke-width="4"/><path d="M554,1078 L560.5,1062.5 L567,1078 Z" fill="#1e9a1e"/><path d="M560,1182.6 H665" stroke="#a01414" stroke-width="4.5"/><path d="M661,1175.5 L681,1182.6 L661,1189.5 Z" fill="#a01414"/><path d="M560,1182.6 L550,1193" stroke="#0a0a80" stroke-width="4"/><circle cx="549.8" cy="1193.3" r="5.5" fill="#0a0a80"/></svg>
<div class="t" style="left:597.5px;top:231.0px;font-size:25.4px;line-height:25.4px;color:#616164;font-weight:700;letter-spacing:1.7px;">A Plate</div>
<div class="t" style="left:1349.0px;top:231.2px;font-size:25.4px;line-height:25.4px;color:#616164;font-weight:700;letter-spacing:1.7px;">A Plate</div>
<div class="t" style="left:844.0px;top:229.1px;font-size:22.1px;line-height:22.1px;color:#fff;font-weight:700;">please apply glue before print</div>
<div class="t" style="left:589.0px;top:283.3px;font-size:31.5px;line-height:31.5px;color:#fff;font-weight:700;transform:scaleX(0.935);transform-origin:0 0;">Creality Smooth PEI Plate</div>
<div class="t" style="left:531.0px;top:1193.2px;font-size:14.5px;line-height:14.5px;color:#fff;font-weight:700;letter-spacing:-0.3px;transform:scaleX(0.86);transform-origin:0 0;">Warning hot surface</div>
<div class="t" style="left:1389.0px;top:1193.2px;font-size:14.5px;line-height:14.5px;color:#fff;font-weight:700;letter-spacing:-0.3px;transform:scaleX(0.86);transform-origin:0 0;">Warning hot surface</div>
<svg class="s" style="left:0;top:0" width="2560" height="1439" viewBox="0 0 2560 1439"><g fill="none" stroke="#505053" stroke-width="3.7" stroke-linejoin="miter"><path d="M965.5,1176 H956.5 A7.2,7.2 0 0 0 956.5,1190.4 H965.5"/><path d="M970.3,1193 V1176 H983.5 V1183.2 H976 L986.5,1192.8"/><path d="M1008.7,1176 H997.5 A7.2,7.2 0 0 0 997.5,1190.4 H1008.7 M992,1183.2 H1008.7"/><path d="M1012.5,1192.6 L1021,1176.5 L1029.5,1192.6 M1018,1190.4 H1029"/><path d="M1035.3,1174 V1190.4 H1048.2"/><path d="M1051,1174 V1192.6"/><path d="M1054.5,1176 H1071.2 M1062.8,1176 V1192.6"/><path d="M1074.5,1174.5 L1082.5,1183.5 L1090.8,1174.5 M1082.5,1183.5 V1192.6"/></g></svg>
<svg class="s" style="left:0;top:0" width="2560" height="1439" viewBox="0 0 2560 1439"><path d="M951.8,530.3 C954.4,531.9 958.8,529.7 964.0,528.3 C969.2,526.9 976.5,523.1 982.8,521.7 C989.0,520.3 994.9,519.6 1001.5,519.8 C1008.1,519.9 1015.3,520.2 1022.2,522.6 C1029.1,525.0 1037.2,529.5 1042.8,533.9 C1048.4,538.3 1052.2,543.9 1056.0,548.9 C1059.8,553.9 1060.9,558.9 1065.3,563.9 C1069.7,568.9 1074.7,572.9 1082.2,578.9 C1089.7,584.9 1105.7,596.1 1110.4,599.6 C1115.1,603.1 1111.0,599.3 1110.4,599.6 C1109.8,599.9 1112.9,604.2 1106.6,601.4 C1100.3,598.6 1082.2,587.4 1072.8,582.7 C1063.4,578.0 1057.8,574.5 1050.3,573.3 C1042.8,572.0 1035.0,574.0 1027.8,575.2 C1020.6,576.5 1012.8,578.3 1007.2,580.8 C1001.6,583.3 998.7,586.1 994.0,590.2 C989.3,594.3 984.0,600.2 979.0,605.2 C974.0,610.2 969.2,616.1 964.0,620.2 C958.8,624.3 955.5,626.5 947.5,630.0 C939.5,633.5 925.4,637.2 916.0,641.0 C906.6,644.8 896.3,648.7 891.0,652.5 C885.7,656.3 885.0,660.7 884.0,664.0 C883.0,667.3 883.8,669.0 885.0,672.5 C886.2,676.0 888.7,679.8 891.0,685.0 C893.3,690.2 897.3,699.0 899.0,704.0 C900.7,709.0 901.2,711.9 901.0,715.0 C900.8,718.1 899.8,721.0 897.5,722.5 C895.2,724.0 891.2,724.2 887.5,724.0 C883.8,723.8 878.9,720.7 875.0,721.0 C871.1,721.3 868.2,725.8 864.0,726.0 C859.8,726.2 854.0,721.8 850.0,722.5 C846.0,723.2 843.3,729.6 840.0,730.0 C836.7,730.4 832.3,727.3 830.0,725.0 C827.7,722.7 828.7,717.0 826.0,716.0 C823.3,715.0 818.3,718.2 814.0,719.0 C809.7,719.8 803.2,722.1 800.0,721.0 C796.8,719.9 794.3,716.8 795.0,712.5 C795.7,708.2 799.8,701.2 804.0,695.0 C808.2,688.8 815.0,681.2 820.0,675.0 C825.0,668.8 830.7,663.2 834.0,657.5 C837.3,651.8 837.3,648.5 840.0,641.0 C842.7,633.5 847.4,619.3 850.0,612.5 C852.6,605.7 856.8,603.0 855.9,600.0 C855.0,597.0 849.1,596.2 844.8,594.8 C840.5,593.4 833.2,592.8 830.2,591.4 C827.2,590.0 829.4,587.6 826.7,586.3 C824.0,585.0 816.9,584.9 813.8,583.7 C810.6,582.6 810.8,580.3 807.8,579.4 C804.8,578.5 798.7,579.2 795.8,578.5 C792.9,577.8 793.9,576.0 790.6,575.1 C787.3,574.2 779.1,574.4 776.0,573.4 C772.9,572.4 776.0,569.8 771.7,569.1 C767.4,568.4 754.9,569.8 750.2,569.1 C745.5,568.4 744.4,566.5 743.4,564.8 C742.4,563.1 746.6,559.9 744.2,558.8 C741.8,557.6 733.1,558.6 728.8,557.9 C724.5,557.2 720.1,556.1 718.4,554.5 C716.7,552.9 719.5,550.1 718.4,548.4 C717.3,546.7 715.3,545.5 711.6,544.1 C707.9,542.7 699.7,541.6 696.1,539.8 C692.5,537.9 690.7,535.1 690.1,533.0 C689.5,530.9 694.0,529.0 692.7,527.0 C691.4,525.0 686.0,522.9 682.3,520.9 C678.6,518.9 673.1,517.5 670.3,514.9 C667.4,512.3 665.8,508.3 665.2,505.5 C664.6,502.7 662.0,498.5 666.9,498.2 C671.8,497.9 684.1,501.6 694.4,503.8 C704.7,506.0 715.9,510.2 728.8,511.5 C741.7,512.8 757.4,511.2 771.7,511.5 C786.0,511.8 801.8,511.9 814.7,513.2 C827.6,514.5 839.7,517.3 849.0,519.2 C858.3,521.1 866.6,524.3 870.6,524.4 C874.6,524.5 873.1,521.3 872.7,519.7 C872.3,518.1 869.2,516.8 868.0,515.0 C866.8,513.2 865.0,510.5 865.6,509.1 C866.2,507.7 871.3,507.9 871.5,506.7 C871.7,505.5 867.8,503.6 866.8,502.0 C865.8,500.4 864.6,498.9 865.6,497.3 C866.6,495.7 872.6,494.2 872.7,492.6 C872.8,491.0 867.4,489.6 866.2,487.8 C865.0,486.0 864.5,483.5 865.6,481.9 C866.7,480.3 872.9,480.2 872.7,478.4 C872.5,476.6 865.6,473.7 864.4,471.3 C863.2,468.9 863.0,465.6 865.6,464.2 C868.2,462.8 878.6,465.0 879.8,463.0 C881.0,461.0 873.7,455.1 872.7,452.4 C871.7,449.6 871.7,447.5 873.9,446.5 C876.1,445.5 884.9,449.4 885.7,446.5 C886.5,443.6 879.4,432.9 878.6,428.8 C877.8,424.7 878.0,422.3 881.0,421.7 C884.0,421.1 894.0,427.2 896.3,425.2 C898.6,423.2 894.4,414.0 894.6,409.9 C894.8,405.8 894.9,401.6 897.5,400.4 C900.1,399.2 908.1,405.1 910.5,402.8 C912.9,400.5 909.9,391.1 911.7,386.3 C913.5,381.5 918.6,374.9 921.1,373.9 C923.6,372.9 925.8,376.0 927.0,380.4 C928.2,384.8 927.2,393.1 928.2,400.4 C929.2,407.7 931.0,416.1 933.0,424.0 C935.0,431.9 937.5,440.8 940.0,447.7 C942.5,454.6 946.1,460.3 948.3,465.4 C950.5,470.5 952.4,472.5 953.0,478.4 C953.6,484.3 952.6,494.1 951.8,500.8 C951.0,507.5 948.3,513.6 948.3,518.5 C948.3,523.4 949.2,528.7 951.8,530.3 Z" fill="#2d2d30"/><path d="M917.1,383.3 A45.8,8.8 75.1 0 1 940.6,471.9 A45.8,8.8 75.1 0 1 917.1,383.3 Z M899.1,403.8 A41.2,9.1 63.4 0 1 936.1,477.4 A41.2,9.1 63.4 0 1 899.1,403.8 Z M882.7,426.0 A37.3,8.6 50.5 0 1 930.1,483.5 A37.3,8.6 50.5 0 1 882.7,426.0 Z M875.8,447.1 A33.5,8.6 37.9 0 1 928.7,488.4 A33.5,8.6 37.9 0 1 875.8,447.1 Z M866.7,466.5 A33.2,8.3 22.1 0 1 928.3,491.4 A33.2,8.3 22.1 0 1 866.7,466.5 Z M867.7,482.9 A30.5,8.1 12.7 0 1 927.3,496.3 A30.5,8.1 12.7 0 1 867.7,482.9 Z M867.7,498.8 A29.5,7.8 7.3 0 1 926.2,506.3 A29.5,7.8 7.3 0 1 867.7,498.8 Z M867.8,512.1 A29.2,7.6 4.5 0 1 926.1,516.7 A29.2,7.6 4.5 0 1 867.8,512.1 Z M674.8,509.9 A58.2,8.8 6.2 0 1 790.5,522.5 A58.2,8.8 6.2 0 1 674.8,509.9 Z M701.5,535.1 A58.3,8.6 -3.8 0 1 817.9,527.4 A58.3,8.6 -3.8 0 1 701.5,535.1 Z M724.1,551.4 A52.8,8.3 -10.7 0 1 828.0,531.8 A52.8,8.3 -10.7 0 1 724.1,551.4 Z M746.7,564.0 A49.4,8.1 -16.8 0 1 841.4,535.5 A49.4,8.1 -16.8 0 1 746.7,564.0 Z M778.1,570.6 A40.6,7.8 -22.7 0 1 853.0,539.2 A40.6,7.8 -22.7 0 1 778.1,570.6 Z M798.1,577.0 A35.5,7.6 -26.9 0 1 861.4,544.8 A35.5,7.6 -26.9 0 1 798.1,577.0 Z M816.4,582.6 A31.4,7.6 -31.9 0 1 869.7,549.5 A31.4,7.6 -31.9 0 1 816.4,582.6 Z M831.3,590.6 A27.5,7.3 -35.3 0 1 876.3,558.7 A27.5,7.3 -35.3 0 1 831.3,590.6 Z M807.2,714.7 A30.8,9.1 -56.5 0 1 841.3,663.3 A30.8,9.1 -56.5 0 1 807.2,714.7 Z M835.8,722.4 A30.4,8.6 -74.8 0 1 851.7,663.6 A30.4,8.6 -74.8 0 1 835.8,722.4 Z M859.2,720.5 A26.3,8.6 -82.7 0 1 865.8,668.5 A26.3,8.6 -82.7 0 1 859.2,720.5 Z M873.8,669.5 A26.9,9.1 71.1 0 1 891.2,720.5 A26.9,9.1 71.1 0 1 873.8,669.5 Z " fill="#2d2d30"/><path d="M918.3,387.7 A41.2,4.2 75.1 0 1 939.4,467.5 A41.2,4.2 75.1 0 1 918.3,387.7 Z M901.2,407.9 A36.6,4.5 63.4 0 1 934.0,473.3 A36.6,4.5 63.4 0 1 901.2,407.9 Z M885.6,429.6 A32.7,4.0 50.5 0 1 927.2,479.9 A32.7,4.0 50.5 0 1 885.6,429.6 Z M879.4,450.0 A28.9,4.0 37.9 0 1 925.1,485.5 A28.9,4.0 37.9 0 1 879.4,450.0 Z M871.0,468.2 A28.6,3.8 22.1 0 1 924.0,489.7 A28.6,3.8 22.1 0 1 871.0,468.2 Z M872.2,483.9 A25.9,3.5 12.7 0 1 922.8,495.3 A25.9,3.5 12.7 0 1 872.2,483.9 Z M872.3,499.4 A24.9,3.2 7.3 0 1 921.6,505.7 A24.9,3.2 7.3 0 1 872.3,499.4 Z M872.4,512.5 A24.6,3.0 4.5 0 1 921.5,516.3 A24.6,3.0 4.5 0 1 872.4,512.5 Z M679.4,510.4 A53.6,4.2 6.2 0 1 785.9,522.0 A53.6,4.2 6.2 0 1 679.4,510.4 Z M706.1,534.8 A53.7,4.0 -3.8 0 1 813.3,527.7 A53.7,4.0 -3.8 0 1 706.1,534.8 Z M728.7,550.5 A48.2,3.8 -10.7 0 1 823.4,532.7 A48.2,3.8 -10.7 0 1 728.7,550.5 Z M751.1,562.7 A44.8,3.5 -16.8 0 1 837.0,536.8 A44.8,3.5 -16.8 0 1 751.1,562.7 Z M782.3,568.8 A36.0,3.2 -22.7 0 1 848.8,541.0 A36.0,3.2 -22.7 0 1 782.3,568.8 Z M802.2,574.9 A30.9,3.0 -26.9 0 1 857.3,546.9 A30.9,3.0 -26.9 0 1 802.2,574.9 Z M820.3,580.2 A26.8,3.0 -31.9 0 1 865.8,551.9 A26.8,3.0 -31.9 0 1 820.3,580.2 Z M835.1,587.9 A22.9,2.8 -35.3 0 1 872.5,561.4 A22.9,2.8 -35.3 0 1 835.1,587.9 Z M809.8,710.9 A26.2,4.5 -56.5 0 1 838.7,667.1 A26.2,4.5 -56.5 0 1 809.8,710.9 Z M837.0,717.9 A25.8,4.0 -74.8 0 1 850.5,668.1 A25.8,4.0 -74.8 0 1 837.0,717.9 Z M859.7,716.0 A21.7,4.0 -82.7 0 1 865.3,673.0 A21.7,4.0 -82.7 0 1 859.7,716.0 Z M875.3,673.9 A22.3,4.5 71.1 0 1 889.7,716.1 A22.3,4.5 71.1 0 1 875.3,673.9 Z M962.8,550.2 A25.6,2.8 27.6 0 1 1008.2,573.9 A25.6,2.8 27.6 0 1 962.8,550.2 Z M1013.4,531.2 A20.0,3.0 30.5 0 1 1047.9,551.6 A20.0,3.0 30.5 0 1 1013.4,531.2 Z M1025.1,564.1 A7.5,1.8 -8.7 0 1 1039.9,561.9 A7.5,1.8 -8.7 0 1 1025.1,564.1 Z M953.5,574.9 A10.9,3.0 3.8 0 1 975.2,576.3 A10.9,3.0 3.8 0 1 953.5,574.9 Z M963.9,596.7 A13.7,2.5 -32.7 0 1 987.1,581.8 A13.7,2.5 -32.7 0 1 963.9,596.7 Z M861.3,612.1 A8.4,2.5 20.3 0 1 877.2,617.9 A8.4,2.5 20.3 0 1 861.3,612.1 Z M854.9,635.6 A8.6,2.5 -30.5 0 1 869.8,626.9 A8.6,2.5 -30.5 0 1 854.9,635.6 Z M921.6,597.9 A11.2,4.8 -68.0 0 1 930.0,577.2 A11.2,4.8 -68.0 0 1 921.6,597.9 Z M925.8,602.0 A11.2,4.8 -23.0 0 1 946.4,593.3 A11.2,4.8 -23.0 0 1 925.8,602.0 Z M925.8,607.9 A11.2,4.8 22.0 0 1 946.6,616.2 A11.2,4.8 22.0 0 1 925.8,607.9 Z M921.7,612.0 A11.2,4.8 67.0 0 1 930.5,632.6 A11.2,4.8 67.0 0 1 921.7,612.0 Z M915.9,612.1 A11.2,4.8 112.0 0 1 907.5,632.8 A11.2,4.8 112.0 0 1 915.9,612.1 Z M911.7,608.0 A11.2,4.8 157.0 0 1 891.1,616.7 A11.2,4.8 157.0 0 1 911.7,608.0 Z M911.7,602.1 A11.2,4.8 -158.0 0 1 890.9,593.8 A11.2,4.8 -158.0 0 1 911.7,602.1 Z M915.8,598.0 A11.2,4.8 -113.0 0 1 907.0,577.4 A11.2,4.8 -113.0 0 1 915.8,598.0 Z M915.75,605 A3,3 0 1 0 921.75,605 A3,3 0 1 0 915.75,605 Z " fill="#4c4b50"/><path d="M885.2,530 Q912,540 911,558 Q909,570 900.2,567" fill="none" stroke="#4c4b50" stroke-width="6" stroke-linecap="round"/><path d="M881,622.5 Q868,635 873.75,653.75" fill="none" stroke="#4c4b50" stroke-width="4.5" stroke-linecap="round"/><circle cx="1033.4" cy="550.8" r="5" fill="#4c4b50"/></svg>
<svg class="s" style="left:0;top:0" width="2560" height="1439" viewBox="0 0 2560 1439"><path d="M1201.6,463.3 C1204.5,464.1 1210.0,468.7 1213.3,473.5 C1216.5,478.3 1219.5,487.0 1221.1,492.2 C1222.7,497.4 1220.9,501.8 1222.7,504.7 C1224.5,507.6 1230.3,505.5 1232.0,509.4 C1233.7,513.3 1231.3,524.8 1232.8,528.2 C1234.2,531.6 1239.0,526.8 1240.7,529.7 C1242.4,532.6 1241.2,542.3 1243.0,545.4 C1244.8,548.5 1249.6,546.1 1251.6,548.5 C1253.5,550.9 1250.7,560.0 1254.7,559.5 C1258.7,559.0 1267.1,552.2 1275.8,545.4 C1284.5,538.6 1296.7,527.9 1307.1,518.8 C1317.5,509.7 1331.4,496.4 1338.4,490.7 C1345.4,485.0 1346.4,483.9 1349.3,484.4 C1352.2,484.9 1354.5,488.3 1355.6,493.8 C1356.6,499.3 1354.9,511.5 1355.6,517.2 C1356.2,522.9 1359.8,523.8 1359.5,528.2 C1359.2,532.6 1354.7,539.6 1354.0,543.8 C1353.3,548.0 1357.2,549.0 1355.6,553.2 C1354.0,557.4 1346.7,564.1 1344.6,568.8 C1342.5,573.5 1345.9,577.2 1343.0,581.4 C1340.1,585.6 1330.2,589.7 1327.4,593.9 C1324.6,598.1 1328.0,602.8 1325.9,606.4 C1323.8,610.0 1316.5,612.4 1314.9,615.8 C1313.3,619.2 1317.8,623.3 1316.5,626.7 C1315.2,630.1 1308.1,633.0 1307.1,636.1 C1306.0,639.2 1311.5,642.6 1310.2,645.5 C1308.9,648.4 1300.6,650.4 1299.3,653.3 C1298.0,656.2 1303.7,658.1 1302.4,662.7 C1301.1,667.3 1295.4,675.4 1291.5,680.7 C1287.6,686.0 1280.3,690.5 1279.0,694.7 C1277.7,698.9 1280.3,701.0 1283.7,705.7 C1287.1,710.4 1294.1,715.6 1299.3,722.9 C1304.5,730.2 1310.7,742.5 1314.9,749.5 C1319.1,756.5 1319.1,758.3 1324.3,765.1 C1329.5,771.9 1339.2,782.8 1346.2,790.1 C1353.2,797.4 1360.8,803.7 1366.5,808.9 C1372.2,814.1 1378.0,817.8 1380.6,821.4 C1383.2,825.0 1384.0,827.1 1382.2,830.8 C1380.4,834.4 1374.9,840.4 1369.7,843.3 C1364.5,846.2 1355.9,845.6 1350.9,848.0 C1346.0,850.4 1345.7,855.1 1340.0,857.4 C1334.3,859.7 1322.2,862.3 1316.5,862.0 C1310.8,861.7 1308.4,860.2 1305.5,855.8 C1302.6,851.4 1301.1,844.1 1299.3,835.5 C1297.5,826.9 1296.2,812.8 1294.6,804.2 C1293.0,795.6 1295.6,790.4 1289.9,783.9 C1284.2,777.4 1270.4,769.8 1260.2,765.1 C1250.0,760.4 1239.9,758.1 1228.9,755.7 C1218.0,753.4 1204.9,754.1 1194.5,751.0 C1184.1,747.9 1174.2,742.0 1166.4,737.0 C1158.6,732.0 1152.8,725.7 1147.6,721.3 C1142.4,716.9 1141.1,713.0 1135.1,710.4 C1129.1,707.8 1119.4,707.3 1111.6,705.7 C1103.8,704.1 1094.2,702.2 1088.2,701.0 C1082.2,699.8 1087.2,692.6 1075.7,698.6 C1064.2,704.6 1028.8,730.6 1019.4,737.0 C1010.0,743.4 1019.7,737.4 1019.4,737.0 C1019.1,736.6 1010.5,743.0 1017.8,734.6 C1025.1,726.2 1054.8,696.7 1063.2,686.9 C1071.6,677.1 1066.4,680.2 1067.9,676.0 C1069.5,671.8 1069.6,666.6 1072.5,661.9 C1075.4,657.2 1080.9,651.2 1085.1,647.8 C1089.3,644.4 1091.9,643.3 1097.6,641.6 C1103.3,639.9 1110.7,637.0 1119.5,637.5 C1128.3,638.0 1143.5,643.4 1150.7,644.7 C1157.9,646.0 1160.9,650.6 1162.5,645.5 C1164.1,640.4 1160.5,623.3 1160.1,614.2 C1159.7,605.1 1159.0,598.0 1160.1,590.7 C1161.1,583.4 1163.3,578.2 1166.4,570.4 C1169.5,562.6 1175.0,552.9 1178.9,543.8 C1182.8,534.7 1187.2,524.8 1189.8,515.7 C1192.4,506.6 1193.5,496.9 1194.5,489.1 C1195.5,481.3 1194.9,473.1 1196.1,468.8 C1197.3,464.5 1198.7,462.5 1201.6,463.3 Z" fill="#2d2d30"/><path d="M974.4,646.0 C977.3,646.8 980.7,652.5 982.2,658.5 C983.8,664.5 983.7,676.7 983.7,681.9 C983.7,687.1 981.2,687.1 982.2,689.7 C983.2,692.3 989.0,692.9 990.0,697.6 C991.0,702.3 988.4,712.7 988.4,717.9 C988.4,723.1 990.0,724.4 990.0,728.8 C990.0,733.2 988.4,739.8 988.4,744.5 C988.4,749.2 990.2,752.3 990.0,757.0 C989.8,761.7 988.2,768.7 986.9,772.6 C985.6,776.5 982.7,777.3 982.2,780.4 C981.7,783.5 984.0,788.0 983.7,791.4 C983.4,794.8 979.8,797.9 980.6,800.8 C981.4,803.7 987.6,805.5 988.4,808.6 C989.2,811.7 987.4,816.4 985.3,819.5 C983.2,822.6 976.9,824.5 975.9,827.4 C974.9,830.3 979.5,833.9 979.0,836.8 C978.5,839.7 973.0,841.7 972.8,844.6 C972.5,847.5 978.8,850.7 977.5,854.4 C976.2,858.1 966.8,863.0 965.0,866.9 C963.2,870.8 969.1,875.2 966.5,877.8 C963.9,880.4 950.3,879.1 949.3,882.5 C948.3,885.9 957.2,892.7 960.3,898.2 C963.4,903.7 966.0,907.3 968.1,915.4 C970.2,923.5 971.2,936.8 972.8,946.7 C974.4,956.6 974.9,965.7 977.5,974.8 C980.1,983.9 985.3,991.8 988.4,1001.4 C991.5,1011.0 995.8,1024.9 996.3,1032.7 C996.8,1040.5 995.5,1044.4 991.6,1048.3 C987.7,1052.2 978.5,1053.5 972.8,1056.1 C967.1,1058.7 962.9,1063.0 957.2,1064.0 C951.5,1065.0 943.6,1064.0 938.4,1062.4 C933.2,1060.8 930.8,1055.9 925.9,1054.6 C921.0,1053.3 912.4,1056.4 908.7,1054.6 C905.1,1052.8 903.2,1047.8 904.0,1043.6 C904.8,1039.4 909.2,1035.5 913.4,1029.5 C917.6,1023.5 925.1,1013.7 929.0,1007.7 C932.9,1001.7 936.0,998.3 936.8,993.6 C937.6,988.9 936.8,983.7 933.7,979.5 C930.6,975.3 924.6,972.5 918.1,968.6 C911.6,964.7 903.7,961.2 894.6,956.0 C885.5,950.8 869.5,939.6 863.3,937.3 C857.0,935.0 860.2,939.7 857.1,942.0 C854.0,944.3 849.2,949.5 844.5,951.3 C839.8,953.1 832.5,953.4 828.9,952.9 C825.3,952.4 827.9,948.5 822.7,948.2 C817.5,947.9 807.0,950.8 797.6,951.3 C788.2,951.8 772.5,952.3 766.3,951.3 C760.0,950.3 767.4,945.9 760.1,945.1 C752.8,944.3 729.4,947.5 722.6,946.7 C715.8,945.9 725.7,942.2 719.4,940.4 C713.1,938.6 691.0,938.1 685.0,935.7 C679.0,933.4 686.4,929.7 683.5,926.3 C680.6,922.9 670.4,918.5 667.8,915.4 C665.2,912.3 665.2,909.2 667.8,907.6 C670.4,906.0 673.1,907.3 683.5,906.0 C693.9,904.7 716.1,901.8 730.4,899.7 C744.7,897.6 757.2,895.6 769.5,893.5 C781.8,891.4 801.3,890.9 803.9,887.2 C806.5,883.6 790.8,876.6 785.1,871.6 C779.4,866.6 775.2,860.1 769.5,857.5 C763.8,854.9 764.8,854.0 750.7,856.0 C736.6,858.0 696.0,867.0 685.0,869.2 C674.0,871.4 684.9,869.6 685.0,869.2 C685.1,868.8 677.4,870.4 685.8,866.9 C694.1,863.4 725.1,852.1 735.1,848.1 C745.1,844.1 741.6,845.9 746.0,843.0 C750.4,840.1 756.2,834.7 761.7,830.5 C767.2,826.3 772.4,821.4 778.9,818.0 C785.4,814.6 794.5,811.2 800.8,810.2 C807.0,809.2 809.9,809.9 816.4,811.7 C822.9,813.5 832.1,817.5 839.9,821.1 C847.7,824.8 857.3,830.7 863.3,833.6 C869.3,836.5 872.1,840.1 875.8,838.3 C879.4,836.5 883.4,830.5 885.2,822.7 C887.0,814.9 886.3,800.5 886.8,791.4 C887.3,782.3 886.7,774.9 888.3,767.9 C889.9,760.9 892.6,755.2 896.2,749.2 C899.9,743.2 904.0,739.3 910.2,732.0 C916.5,724.7 927.2,713.5 933.7,705.4 C940.2,697.3 944.1,692.1 949.3,683.5 C954.5,674.9 960.8,660.0 965.0,653.8 C969.2,647.5 971.5,645.2 974.4,646.0 Z" fill="#2d2d30"/><path d="M1207.7,484.1 A44.1,9.4 108.5 0 1 1179.8,567.6 A44.1,9.4 108.5 0 1 1207.7,484.1 Z M1225.0,515.9 A40.7,10.0 122.6 0 1 1181.2,584.3 A40.7,10.0 122.6 0 1 1225.0,515.9 Z M1236.5,534.5 A46.2,10.6 125.9 0 1 1182.2,609.4 A46.2,10.6 125.9 0 1 1236.5,534.5 Z M1239.6,561.5 A44.7,10.0 127.4 0 1 1185.4,632.5 A44.7,10.0 127.4 0 1 1239.6,561.5 Z M1352.0,497.2 A51.4,10.0 142.9 0 1 1270.0,559.2 A51.4,10.0 142.9 0 1 1352.0,497.2 Z M1356.1,526.2 A52.3,10.6 152.9 0 1 1262.8,573.9 A52.3,10.6 152.9 0 1 1356.1,526.2 Z M1350.0,550.3 A48.9,10.6 157.7 0 1 1259.5,587.4 A48.9,10.6 157.7 0 1 1350.0,550.3 Z M1337.9,574.7 A42.5,10.6 164.5 0 1 1256.0,597.4 A42.5,10.6 164.5 0 1 1337.9,574.7 Z M1325.6,597.3 A38.6,10.6 169.9 0 1 1249.6,610.8 A38.6,10.6 169.9 0 1 1325.6,597.3 Z M1316.2,619.3 A36.0,10.6 172.0 0 1 1244.9,629.4 A36.0,10.6 172.0 0 1 1316.2,619.3 Z M1308.2,643.5 A33.2,10.0 176.6 0 1 1241.9,647.4 A33.2,10.0 176.6 0 1 1308.2,643.5 Z M1301.9,664.7 A31.6,10.0 -176.3 0 1 1238.8,660.6 A31.6,10.0 -176.3 0 1 1301.9,664.7 Z M1302.1,784.6 A38.0,10.0 75.3 0 1 1321.5,858.2 A38.0,10.0 75.3 0 1 1302.1,784.6 Z M1312.1,783.3 A36.1,10.0 67.6 0 1 1339.6,850.1 A36.1,10.0 67.6 0 1 1312.1,783.3 Z M1318.9,777.7 A37.5,10.0 58.8 0 1 1357.8,841.7 A37.5,10.0 58.8 0 1 1318.9,777.7 Z M1324.2,772.1 A38.3,10.0 49.0 0 1 1374.5,830.0 A38.3,10.0 49.0 0 1 1324.2,772.1 Z " fill="#2d2d30"/><path d="M973.9,661.4 A50.6,10.6 123.1 0 1 918.5,746.2 A50.6,10.6 123.1 0 1 973.9,661.4 Z M986.0,697.0 A49.0,10.6 135.8 0 1 915.8,765.4 A49.0,10.6 135.8 0 1 986.0,697.0 Z M988.3,727.5 A43.4,10.6 143.9 0 1 918.2,778.7 A43.4,10.6 143.9 0 1 988.3,727.5 Z M988.6,752.9 A41.0,10.6 147.4 0 1 919.5,797.1 A41.0,10.6 147.4 0 1 988.6,752.9 Z M983.0,782.5 A35.1,10.6 160.0 0 1 917.2,806.5 A35.1,10.6 160.0 0 1 983.0,782.5 Z M981.9,807.2 A33.1,10.6 169.4 0 1 916.8,819.4 A33.1,10.6 169.4 0 1 981.9,807.2 Z M978.5,833.9 A28.4,10.0 -177.8 0 1 921.7,831.7 A28.4,10.0 -177.8 0 1 978.5,833.9 Z M973.8,853.1 A24.6,10.0 -174.9 0 1 924.8,848.6 A24.6,10.0 -174.9 0 1 973.8,853.1 Z M689.1,916.6 A63.3,9.4 -9.6 0 1 813.9,895.4 A63.3,9.4 -9.6 0 1 689.1,916.6 Z M695.1,931.1 A67.4,10.0 -12.8 0 1 826.6,901.3 A67.4,10.0 -12.8 0 1 695.1,931.1 Z M737.5,939.5 A51.5,10.0 -17.5 0 1 835.9,908.5 A51.5,10.0 -17.5 0 1 737.5,939.5 Z M778.5,943.4 A35.6,10.0 -24.4 0 1 843.3,914.0 A35.6,10.0 -24.4 0 1 778.5,943.4 Z M805.7,947.1 A25.2,9.4 -30.9 0 1 849.0,921.2 A25.2,9.4 -30.9 0 1 805.7,947.1 Z M831.5,949.3 A16.7,8.8 -38.5 0 1 857.6,928.4 A16.7,8.8 -38.5 0 1 831.5,949.3 Z M918.0,1051.8 A30.7,10.0 -64.3 0 1 944.7,996.4 A30.7,10.0 -64.3 0 1 918.0,1051.8 Z M946.7,1061.8 A34.2,10.0 -81.7 0 1 956.7,994.2 A34.2,10.0 -81.7 0 1 946.7,1061.8 Z M968.8,1055.6 A33.2,10.0 -95.2 0 1 962.7,989.4 A33.2,10.0 -95.2 0 1 968.8,1055.6 Z M990.2,1041.3 A29.1,10.0 -104.5 0 1 975.7,984.9 A29.1,10.0 -104.5 0 1 990.2,1041.3 Z " fill="#2d2d30"/><path d="M1206.3,488.4 A39.5,4.8 108.5 0 1 1181.2,563.3 A39.5,4.8 108.5 0 1 1206.3,488.4 Z M1222.6,519.7 A36.1,5.4 122.6 0 1 1183.6,580.5 A36.1,5.4 122.6 0 1 1222.6,519.7 Z M1233.8,538.3 A41.6,6.0 125.9 0 1 1184.9,605.6 A41.6,6.0 125.9 0 1 1233.8,538.3 Z M1236.8,565.2 A40.1,5.4 127.4 0 1 1188.2,628.8 A40.1,5.4 127.4 0 1 1236.8,565.2 Z M1348.4,500.0 A46.8,5.4 142.9 0 1 1273.6,556.4 A46.8,5.4 142.9 0 1 1348.4,500.0 Z M1352.0,528.3 A47.7,6.0 152.9 0 1 1266.9,571.8 A47.7,6.0 152.9 0 1 1352.0,528.3 Z M1345.8,552.1 A44.3,6.0 157.7 0 1 1263.7,585.6 A44.3,6.0 157.7 0 1 1345.8,552.1 Z M1333.5,575.9 A37.9,6.0 164.5 0 1 1260.4,596.2 A37.9,6.0 164.5 0 1 1333.5,575.9 Z M1321.1,598.1 A34.0,6.0 169.9 0 1 1254.1,610.0 A34.0,6.0 169.9 0 1 1321.1,598.1 Z M1311.7,620.0 A31.4,6.0 172.0 0 1 1249.4,628.7 A31.4,6.0 172.0 0 1 1311.7,620.0 Z M1303.6,643.7 A28.6,5.4 176.6 0 1 1246.5,647.2 A28.6,5.4 176.6 0 1 1303.6,643.7 Z M1297.3,664.4 A27.0,5.4 -176.3 0 1 1243.4,660.9 A27.0,5.4 -176.3 0 1 1297.3,664.4 Z M1077.4,675.5 A21.0,3.6 -39.2 0 1 1109.9,649.1 A21.0,3.6 -39.2 0 1 1077.4,675.5 Z M1087.0,681.9 A8.4,2.4 12.4 0 1 1103.5,685.6 A8.4,2.4 12.4 0 1 1087.0,681.9 Z M1125.6,699.1 A26.9,4.2 -34.7 0 1 1169.7,668.5 A26.9,4.2 -34.7 0 1 1125.6,699.1 Z M1157.1,696.4 A10.9,3.0 -2.4 0 1 1178.8,695.4 A10.9,3.0 -2.4 0 1 1157.1,696.4 Z M1144.7,704.9 A16.2,3.0 32.0 0 1 1172.3,722.1 A16.2,3.0 32.0 0 1 1144.7,704.9 Z M1261.6,723.6 A10.3,3.6 -21.9 0 1 1280.7,715.9 A10.3,3.6 -21.9 0 1 1261.6,723.6 Z M1274.2,733.0 A8.8,3.6 26.4 0 1 1289.9,740.8 A8.8,3.6 26.4 0 1 1274.2,733.0 Z M1303.3,789.1 A33.4,5.4 75.3 0 1 1320.3,853.7 A33.4,5.4 75.3 0 1 1303.3,789.1 Z M1313.9,787.6 A31.5,5.4 67.6 0 1 1337.8,845.8 A31.5,5.4 67.6 0 1 1313.9,787.6 Z M1321.3,781.6 A32.9,5.4 58.8 0 1 1355.4,837.8 A32.9,5.4 58.8 0 1 1321.3,781.6 Z M1327.2,775.6 A33.7,5.4 49.0 0 1 1371.5,826.5 A33.7,5.4 49.0 0 1 1327.2,775.6 Z M1220.1,710.7 A11.2,4.8 -80.0 0 1 1224.0,688.7 A11.2,4.8 -80.0 0 1 1220.1,710.7 Z M1225.0,713.8 A11.2,4.8 -35.0 0 1 1243.4,701.0 A11.2,4.8 -35.0 0 1 1225.0,713.8 Z M1226.3,719.5 A11.2,4.8 10.0 0 1 1248.3,723.4 A11.2,4.8 10.0 0 1 1226.3,719.5 Z M1223.2,724.4 A11.2,4.8 55.0 0 1 1236.0,742.8 A11.2,4.8 55.0 0 1 1223.2,724.4 Z M1217.5,725.7 A11.2,4.8 100.0 0 1 1213.6,747.7 A11.2,4.8 100.0 0 1 1217.5,725.7 Z M1212.6,722.6 A11.2,4.8 145.0 0 1 1194.2,735.4 A11.2,4.8 145.0 0 1 1212.6,722.6 Z M1211.3,716.9 A11.2,4.8 -170.0 0 1 1189.3,713.0 A11.2,4.8 -170.0 0 1 1211.3,716.9 Z M1214.4,712.0 A11.2,4.8 -125.0 0 1 1201.6,693.6 A11.2,4.8 -125.0 0 1 1214.4,712.0 Z M1215.8,718.2 A3,3 0 1 0 1221.8,718.2 A3,3 0 1 0 1215.8,718.2 Z  M971.3,665.3 A46.0,6.0 123.1 0 1 921.1,742.3 A46.0,6.0 123.1 0 1 971.3,665.3 Z M982.8,700.2 A44.4,6.0 135.8 0 1 919.0,762.2 A44.4,6.0 135.8 0 1 982.8,700.2 Z M984.6,730.2 A38.8,6.0 143.9 0 1 921.9,776.0 A38.8,6.0 143.9 0 1 984.6,730.2 Z M984.7,755.4 A36.4,6.0 147.4 0 1 923.4,794.6 A36.4,6.0 147.4 0 1 984.7,755.4 Z M978.7,784.1 A30.5,6.0 160.0 0 1 921.5,804.9 A30.5,6.0 160.0 0 1 978.7,784.1 Z M977.3,808.0 A28.5,6.0 169.4 0 1 921.4,818.6 A28.5,6.0 169.4 0 1 977.3,808.0 Z M973.9,833.7 A23.8,5.4 -177.8 0 1 926.3,831.9 A23.8,5.4 -177.8 0 1 973.9,833.7 Z M969.2,852.6 A20.0,5.4 -174.9 0 1 929.4,849.1 A20.0,5.4 -174.9 0 1 969.2,852.6 Z M775.2,832.3 A20.2,4.2 -7.3 0 1 815.4,827.1 A20.2,4.2 -7.3 0 1 775.2,832.3 Z M693.6,915.8 A58.7,4.8 -9.6 0 1 809.4,896.2 A58.7,4.8 -9.6 0 1 693.6,915.8 Z M699.6,930.1 A62.8,5.4 -12.8 0 1 822.1,902.3 A62.8,5.4 -12.8 0 1 699.6,930.1 Z M741.9,938.1 A46.9,5.4 -17.5 0 1 831.5,909.9 A46.9,5.4 -17.5 0 1 741.9,938.1 Z M782.6,941.5 A31.0,5.4 -24.4 0 1 839.2,915.9 A31.0,5.4 -24.4 0 1 782.6,941.5 Z M809.6,944.7 A20.6,4.8 -30.9 0 1 845.1,923.6 A20.6,4.8 -30.9 0 1 809.6,944.7 Z M835.1,946.4 A12.1,4.2 -38.5 0 1 854.0,931.3 A12.1,4.2 -38.5 0 1 835.1,946.4 Z M808.2,878.6 A26.7,4.2 -22.4 0 1 857.4,858.3 A26.7,4.2 -22.4 0 1 808.2,878.6 Z M841.2,882.2 A11.3,3.6 9.7 0 1 863.6,886.0 A11.3,3.6 9.7 0 1 841.2,882.2 Z M827.8,886.2 A15.9,3.0 40.6 0 1 851.9,907.0 A15.9,3.0 40.6 0 1 827.8,886.2 Z M938.3,919.1 A9.2,3.6 -18.6 0 1 955.7,913.2 A9.2,3.6 -18.6 0 1 938.3,919.1 Z M944.7,928.5 A9.2,3.6 32.0 0 1 960.2,938.3 A9.2,3.6 32.0 0 1 944.7,928.5 Z M920.0,1047.6 A26.1,5.4 -64.3 0 1 942.7,1000.6 A26.1,5.4 -64.3 0 1 920.0,1047.6 Z M947.4,1057.3 A29.6,5.4 -81.7 0 1 956.0,998.7 A29.6,5.4 -81.7 0 1 947.4,1057.3 Z M968.3,1051.0 A28.6,5.4 -95.2 0 1 963.2,994.0 A28.6,5.4 -95.2 0 1 968.3,1051.0 Z M989.1,1036.8 A24.5,5.4 -104.5 0 1 976.8,989.4 A24.5,5.4 -104.5 0 1 989.1,1036.8 Z M901.5,901.0 A10.7,4.8 -60.0 0 1 912.2,882.5 A10.7,4.8 -60.0 0 1 901.5,901.0 Z M905.1,905.6 A10.7,4.8 -15.0 0 1 925.7,900.1 A10.7,4.8 -15.0 0 1 905.1,905.6 Z M904.3,911.4 A10.7,4.8 30.0 0 1 922.8,922.1 A10.7,4.8 30.0 0 1 904.3,911.4 Z M899.7,915.0 A10.7,4.8 75.0 0 1 905.2,935.6 A10.7,4.8 75.0 0 1 899.7,915.0 Z M893.9,914.2 A10.7,4.8 120.0 0 1 883.2,932.7 A10.7,4.8 120.0 0 1 893.9,914.2 Z M890.3,909.6 A10.7,4.8 165.0 0 1 869.7,915.1 A10.7,4.8 165.0 0 1 890.3,909.6 Z M891.1,903.8 A10.7,4.8 -150.0 0 1 872.6,893.1 A10.7,4.8 -150.0 0 1 891.1,903.8 Z M895.7,900.2 A10.7,4.8 -105.0 0 1 890.2,879.6 A10.7,4.8 -105.0 0 1 895.7,900.2 Z M894.7,907.6 A3,3 0 1 0 900.7,907.6 A3,3 0 1 0 894.7,907.6 Z " fill="#4c4b50"/><path d="M1235.2,592.3 Q1205,630 1213.3,652 Q1220,663 1230.5,657" fill="none" stroke="#4c4b50" stroke-width="6" stroke-linecap="round"/><path d="M1261.8,730.7 Q1278,745 1274.3,763.5" fill="none" stroke="#4c4b50" stroke-width="4.5" stroke-linecap="round"/><circle cx="1092.9" cy="672.8" r="4.5" fill="#4c4b50"/><path d="M933.7,923.2 Q948,938 943.1,954.5" fill="none" stroke="#4c4b50" stroke-width="4.5" stroke-linecap="round"/><circle cx="786.7" cy="839.9" r="4.5" fill="#4c4b50"/></svg>
<svg class="s" style="left:558px;top:170px;" width="54" height="54" viewBox="0 0 54 54"><circle cx="27" cy="27" r="25" fill="#434246" stroke="#5a5a5d" stroke-width="2.6"/><path d="M18,33 L19.5,27 L30,16.5 Q32,15 34,17 Q35.5,19 34,20.5 L23.5,31 Z M28,18.5 L32,22.5" fill="none" stroke="#d0d0d2" stroke-width="1.8" stroke-linejoin="round"/><path d="M16,37 H38" stroke="#d0d0d2" stroke-width="2"/></svg>
<div class="t" style="left:1424.5px;top:156.1px;font-size:59px;line-height:59px;color:#1ec85c;font-weight:700;transform:scaleX(0.79);transform-origin:0 0;">01</div>
<svg class="s" style="left:1756px;top:140px;" width="34" height="30" viewBox="0 0 34 30"><path d="M2,14 L17,2 L32,14 L27,14 L27,27 L20,27 L20,20 L14,20 L14,27 L7,27 L7,14 Z" fill="#707073"/></svg>
<div class="r" style="left:1787px;top:207px;width:79px;height:78px;background:linear-gradient(#666669 0%,#606063 82%,#5a5a5d 83%,#5d5d60 100%);"></div>
<div class="t" style="left:1801.0px;top:236.7px;font-size:19.2px;line-height:19.2px;color:#dcdcdc;font-weight:700;">Oben</div>
<div class="r" style="left:1522px;top:255.4px;width:66px;height:66px;border-radius:50%;background:#48474c;border:3px solid #616164;"></div>
<div class="r" style="left:1522px;top:344.0px;width:66px;height:66px;border-radius:50%;background:#48474c;border:3px solid #616164;"></div>
<div class="r" style="left:1522px;top:432.5px;width:66px;height:66px;border-radius:50%;background:#48474c;border:3px solid #616164;"></div>
<div class="r" style="left:1522px;top:521.0px;width:66px;height:66px;border-radius:50%;background:#48474c;border:3px solid #616164;"></div>
<div class="r" style="left:1522px;top:609.6px;width:66px;height:66px;border-radius:50%;background:#48474c;border:3px solid #616164;"></div>
<svg class="s" style="left:1535px;top:268px;" width="40" height="40" viewBox="0 0 40 40"><path d="M8,8 L32,32 M32,8 L8,32" stroke="#d4d4d4" stroke-width="3.4" stroke-linecap="round"/></svg>
<svg class="s" style="left:1535px;top:357px;" width="40" height="40" viewBox="0 0 40 40"><rect x="3" y="8" width="11.5" height="11.5" rx="3" fill="#d4d4d4"/><rect x="3" y="22.5" width="11.5" height="11.5" rx="3" fill="#d4d4d4"/><path d="M19,9.5 H34.5 M19,17 H34.5 M19,24 H34.5 M19,31.5 H34.5" stroke="#d4d4d4" stroke-width="2.6" stroke-linecap="round"/></svg>
<svg class="s" style="left:1530px;top:438px;" width="50" height="55" viewBox="0 0 50 55"><text x="25" y="17" text-anchor="middle" font-family="Liberation Sans" font-weight="700" font-size="13" fill="#d8d8d8">AUTO</text><rect x="10" y="20" width="16" height="20" rx="2.5" transform="rotate(30 18 30)" fill="#d8d8d8"/><path d="M29,35 Q34,35 34,40 M31.5,38.5 L34,41 L36.5,38.5" stroke="#d8d8d8" stroke-width="1.6" fill="none"/><rect x="9" y="45" width="30" height="2.5" fill="#d8d8d8"/></svg>
<svg class="s" style="left:1535px;top:534px;" width="40" height="40" viewBox="0 0 40 40"><path d="M11,16 V12.5 Q11,5 20,5 Q29,5 29,12" fill="none" stroke="#d4d4d4" stroke-width="3.6"/><rect x="6.5" y="15.5" width="27" height="22" rx="3" fill="#d4d4d4"/><circle cx="20" cy="24.5" r="3" fill="#48474c"/><path d="M18.6,25 L17.8,31 H22.2 L21.4,25 Z" fill="#48474c"/></svg>
<svg class="s" style="left:1535px;top:622.6px;" width="40" height="40.0" viewBox="0 0 40 40"><path d="M33.13,21.37 L36.65,24.32 L32.06,32.26 L27.75,30.69 L25.38,32.05 L24.59,36.58 L15.41,36.58 L14.62,32.05 L12.25,30.69 L7.94,32.26 L3.35,24.32 L6.87,21.37 L6.87,18.63 L3.35,15.68 L7.94,7.74 L12.25,9.31 L14.62,7.95 L15.41,3.42 L24.59,3.42 L25.38,7.95 L27.75,9.31 L32.06,7.74 L36.65,15.68 L33.13,18.63 Z M20,12 A8,8 0 1,0 20,28 A8,8 0 1,0 20,12 Z" fill="#d4d4d4" fill-rule="evenodd" stroke="#d4d4d4" stroke-width="1.5" stroke-linejoin="round"/></svg>
<div class="r" style="left:1796px;top:401px;width:6px;height:497px;background:#1ec85c;"></div>
<div class="r" style="left:1788px;top:390px;width:22px;height:22px;border-radius:50%;background:#1ec85c"></div>
<div class="r" style="left:1788px;top:886.5px;width:22px;height:22px;border-radius:50%;background:#1ec85c"></div>
<div class="r" style="left:1867px;top:312px;width:81px;height:555px;background:#4a4a47;border-radius:10px 0 0 10px;"></div>
<svg class="s" style="left:1878px;top:338px;" width="60" height="65" viewBox="0 0 60 65"><rect x="5" y="5" width="13" height="6" rx="3" fill="#ffffff"/><rect x="5" y="20" width="33" height="12" rx="2" fill="none" stroke="#ffffff" stroke-width="3"/><rect x="5" y="41" width="50" height="17" rx="2" fill="none" stroke="#ffffff" stroke-width="3"/></svg>
<svg class="s" style="left:1878px;top:428px;" width="60" height="60" viewBox="0 0 60 60"><rect x="5" y="5" width="50" height="50" rx="9" fill="none" stroke="#ffffff" stroke-width="3.2"/><path d="M16,14 V24 M16,31 V40 M44,14 V24 M44,31 V40 M23,14 H37 M23,47 H37" stroke="#ffffff" stroke-width="3"/></svg>
<svg class="s" style="left:1878px;top:518px;" width="60" height="54" viewBox="0 0 60 54"><path d="M9,46 A24,24 0 1,1 51,46" fill="none" stroke="#ffffff" stroke-width="3.2" stroke-linecap="round"/><path d="M30,7 V13 M12,20 L16,23 M48,20 L44,23 M6,38 H11 M54,38 H49" stroke="#ffffff" stroke-width="2.8" stroke-linecap="round"/><path d="M25,36 L41,23 L33,40 Q29,42 26,40 Q23,38 25,36 Z" fill="#ffffff"/></svg>
<svg class="s" style="left:1878px;top:600px;" width="60" height="58" viewBox="0 0 60 58"><path d="M4.5,51.5 H53" stroke="#ffffff" stroke-width="3.4" stroke-linecap="round"/><path d="M10,51 V38 Q10,33 14,31 M22,51 V38 M34.5,51 V39 M45.5,51 V37 Q45,33 42,30" fill="none" stroke="#ffffff" stroke-width="3.2"/><path d="M19,6 Q17.6,5 16,6.5 L6,18 Q4.5,20 6.5,21.5 L27,37.5 Q29,39 30.5,37 L41,24.5 Q42.5,22.5 40.5,21 Z" fill="none" stroke="#ffffff" stroke-width="3.2" stroke-linejoin="round"/></svg>
<svg class="s" style="left:1878px;top:690px;" width="60" height="58" viewBox="0 0 60 58"><circle cx="29" cy="28" r="22.5" fill="none" stroke="#ffffff" stroke-width="3.2"/><circle cx="29" cy="28" r="7.5" fill="none" stroke="#ffffff" stroke-width="3.2"/><path d="M29,5 V13 M29,43 V51 M6,28 H14 M44,28 H52" stroke="#ffffff" stroke-width="3"/><path d="M38,49 Q46,52 53,51" fill="none" stroke="#ffffff" stroke-width="3"/></svg>
<svg class="s" style="left:1878px;top:777px;" width="60" height="60" viewBox="0 0 60 60"><path d="M28,28 H16 A12,12 0 1,1 28,16 Z M32,28 V16 A12,12 0 1,1 44,28 Z M28,32 V44 A12,12 0 1,1 16,32 Z M32,32 H44 A12,12 0 1,1 32,44 Z" fill="none" stroke="#ffffff" stroke-width="3.2"/></svg>
<svg class="s" style="left:1932px;top:215px;" width="18" height="50" viewBox="0 0 18 50"><path d="M18,0 A18,25 0 0,0 18,50 Z" fill="#1a1a1a"/><path d="M9,21 L13,25 L9,29 Z" fill="#fff"/></svg>
<div class="r" style="left:1948px;top:54px;width:1.5px;height:1312px;background:#2c2c2e;"></div>
<svg class="s" style="left:1962px;top:63px;" width="28" height="27" viewBox="0 0 28 27"><path d="M9,2.5 Q3,2.5 3,13.5 Q3,25 9,25" fill="none" stroke="#a8a8ab" stroke-width="1.7"/><path d="M14,2.5 Q8,3 8,13.5 Q8,24 14,25" fill="none" stroke="#1ec85c" stroke-width="1.9"/><path d="M19,2.5 Q13.5,3 13.5,13.5 Q13.5,24 19,25" fill="none" stroke="#1ec85c" stroke-width="1.9"/><ellipse cx="21.5" cy="13.5" rx="3.5" ry="11.3" fill="none" stroke="#a8a8ab" stroke-width="1.7"/></svg>
<div class="t" style="left:2007.0px;top:66.6px;font-size:22.9px;line-height:22.9px;color:#fff;font-weight:700;">Filament</div>
<svg class="s" style="left:2317px;top:65px;" width="26" height="24" viewBox="0 0 26 24"><path d="M3,3 H9 M3,3 V21 H9 M17,3 H23 V21 H17 Z" fill="none" stroke="#ffffff" stroke-width="2.6"/><path d="M6,12 H14 M11,9 L14,12 L11,15" fill="none" stroke="#ffffff" stroke-width="2"/><rect x="16" y="3" width="7" height="18" fill="#ffffff"/><circle cx="19.5" cy="12" r="2" fill="#4b4b4e"/></svg>
<svg class="s" style="left:2365px;top:64px;" width="26" height="26" viewBox="0 0 26 26"><path d="M2,10 Q2,7 5,7 H12 V4 H9 V2 H19 V4 H16 V7 H24 V15 H17 Q17,13 15,13 H7 Q5,13 5,16 H2 Z" fill="#ffffff"/><circle cx="3.5" cy="22" r="2" fill="#ffffff"/></svg>
<svg class="s" style="left:2415px;top:65px;" width="26" height="26" viewBox="0 0 26 26"><circle cx="13" cy="13" r="10.5" fill="none" stroke="#ffffff" stroke-width="2.4"/><path d="M13,7.5 V18.5 M7.5,13 H18.5" stroke="#ffffff" stroke-width="2.6"/></svg>
<svg class="s" style="left:2465px;top:65px;" width="26" height="26" viewBox="0 0 26 26"><circle cx="13" cy="13" r="10.5" fill="none" stroke="#ffffff" stroke-width="2.4"/><path d="M7.5,13 H18.5" stroke="#ffffff" stroke-width="2.6"/></svg>
<svg class="s" style="left:2511px;top:65px;" width="24" height="24" viewBox="0 0 24 24"><path d="M20.30,12.27 L23.09,14.16 L21.37,18.31 L18.06,17.67 L17.67,18.06 L18.31,21.37 L14.16,23.09 L12.27,20.30 L11.73,20.30 L9.84,23.09 L5.69,21.37 L6.33,18.06 L5.94,17.67 L2.63,18.31 L0.91,14.16 L3.70,12.27 L3.70,11.73 L0.91,9.84 L2.63,5.69 L5.94,6.33 L6.33,5.94 L5.69,2.63 L9.84,0.91 L11.73,3.70 L12.27,3.70 L14.16,0.91 L18.31,2.63 L17.67,5.94 L18.06,6.33 L21.37,5.69 L23.09,9.84 L20.30,11.73 Z" fill="none" stroke="#ffffff" stroke-width="2" stroke-linejoin="round"/><circle cx="12" cy="12" r="4" fill="none" stroke="#ffffff" stroke-width="2"/></svg>
<div class="r" style="left:1950px;top:106px;width:171px;height:64px;background:#000;border-radius:3px;"></div>
<div class="t" style="left:1988.0px;top:114.9px;font-size:19px;line-height:19px;color:#fff;font-weight:400;">1</div>
<div class="t" style="left:1984.0px;top:145.7px;font-size:19.2px;line-height:19.2px;color:#fff;font-weight:400;">Hyper PLA</div>
<svg class="s" style="left:2083px;top:150px;" width="12" height="8" viewBox="0 0 12 8"><path d="M1,1 L11,1 L6,7 Z" fill="#ffffff"/></svg>
<div class="r" style="left:1950px;top:184px;width:610px;height:1.5px;background:#59595c;"></div>
<svg class="s" style="left:1963px;top:198px;" width="30" height="29" viewBox="0 0 30 29"><path d="M5,2 V27 M15,2 V27 M25,2 V27" stroke="#ffffff" stroke-width="3.2"/><rect x="1.5" y="17" width="7" height="5" rx="2" fill="#ffffff"/><rect x="11.5" y="6" width="7" height="5" rx="2" fill="#ffffff"/><rect x="21.5" y="19" width="7" height="5" rx="2" fill="#ffffff"/></svg>
<div class="t" style="left:2009.0px;top:202.3px;font-size:20.9px;line-height:20.9px;color:#fff;font-weight:700;">Prozess</div>
<div class="r" style="left:2103px;top:199px;width:91px;height:26px;background:#1ec85c;border-radius:2px;"></div>
<div class="t" style="left:2108.0px;top:203.6px;font-size:18.2px;line-height:18.2px;color:#fff;font-weight:400;">Allgemein</div>
<div class="t" style="left:2205.0px;top:203.5px;font-size:18.3px;line-height:18.3px;color:#f0f0f0;font-weight:400;">Objekte</div>
<svg class="s" style="left:2386px;top:199px;" width="28" height="26" viewBox="0 0 28 26"><path d="M3,5 H13 M21,5 H25 M3,13 H13 M21,13 H25 M3,21 H13 M21,21 H25" stroke="#1ec85c" stroke-width="2.4"/><circle cx="17" cy="5" r="3" fill="#1ec85c"/><circle cx="17" cy="13" r="3" fill="#1ec85c"/><circle cx="17" cy="21" r="3" fill="#1ec85c"/></svg>
<svg class="s" style="left:2450px;top:199px;" width="26" height="26" viewBox="0 0 26 26"><rect x="3" y="2" width="20" height="22" rx="2" fill="none" stroke="#7c9585" stroke-width="1.8"/><path d="M7,8 H9 M11,8 H19 M7,13 H9 M11,13 H19 M7,18 H9 M11,18 H19" stroke="#6fa083" stroke-width="1.6"/></svg>
<svg class="s" style="left:2511px;top:199px;" width="26" height="26" viewBox="0 0 26 26"><circle cx="19" cy="5" r="3" fill="none" stroke="#ffffff" stroke-width="2.2"/><circle cx="5" cy="11" r="3" fill="none" stroke="#ffffff" stroke-width="2.2"/><circle cx="21" cy="12" r="3" fill="none" stroke="#ffffff" stroke-width="2.2"/><circle cx="8" cy="20" r="3" fill="#ffffff"/><path d="M7.5,10 L16.5,6 M8,11.5 L18,12 M10,18 L19,14" stroke="#ffffff" stroke-width="2"/></svg>
<div class="r" style="left:1950.5px;top:255px;width:483.0px;height:45px;background:transparent;border:1px solid #5d5d60;border-radius:4px;"></div>
<svg class="s" style="left:1956px;top:270px;" width="20" height="12" viewBox="0 0 20 12"><path d="M2,3 L9,9 L16,3" fill="none" stroke="#b8b8b8" stroke-width="1.6"/></svg>
<div class="t" style="left:1980.0px;top:267.6px;font-size:20.5px;line-height:20.5px;color:#f2f2f2;font-weight:400;">0.20mm Standard @Creality Ender-3 V3 KE 0....</div>
<svg class="s" style="left:2480px;top:265px;" width="24" height="24" viewBox="0 0 24 24"><path d="M3,3 H18 L21,6 V21 H3 Z" fill="none" stroke="#707073" stroke-width="2"/><path d="M7,3 V9 H16 V3 M7,21 V14 H17 V21" fill="none" stroke="#707073" stroke-width="2"/></svg>
<svg class="s" style="left:2525px;top:265px;" width="24" height="24" viewBox="0 0 24 24"><circle cx="10" cy="10" r="7.5" fill="none" stroke="#707073" stroke-width="2.2"/><path d="M15.5,15.5 L22,22" stroke="#707073" stroke-width="2.4"/></svg>
<div class="r" style="left:1949.5px;top:331.5px;width:608.5px;height:737.5px;background:transparent;border:2.2px solid #3d8c58;border-radius:5px;"></div>
<div class="r" style="left:2518px;top:347px;width:27px;height:679px;background:#1b1b1c;"></div>
<div class="r" style="left:2525px;top:374px;width:14px;height:129px;background:#8f8f91;"></div>
<div class="r" style="left:1965px;top:1026px;width:553px;height:26px;background:#1b1b1c;"></div>
<div class="r" style="left:1992px;top:1033px;width:388px;height:14px;background:#8f8f91;"></div>
<svg class="s" style="left:1966px;top:347px;" width="30" height="32" viewBox="0 0 30 32"><path d="M3,3 V27 M1,3 H5 M1,27 H5" stroke="#1ec85c" stroke-width="2"/><rect x="9" y="4" width="18" height="4.5" rx="2.2" fill="none" stroke="#ffffff" stroke-width="1.8"/><rect x="9" y="11" width="18" height="4.5" rx="2.2" fill="none" stroke="#ffffff" stroke-width="1.8"/><rect x="9" y="18" width="18" height="4.5" rx="2.2" fill="none" stroke="#ffffff" stroke-width="1.8"/><path d="M1,29.5 H27" stroke="#ffffff" stroke-width="2"/></svg>
<div class="t" style="left:2000.0px;top:353.9px;font-size:20.2px;line-height:20.2px;color:#fff;font-weight:700;">Schichthöhe</div>
<div class="r" style="left:2128px;top:362.5px;width:390px;height:1.5px;background:#5c5c5f;"></div>
<svg class="s" style="left:1966px;top:468px;" width="30" height="30" viewBox="0 0 30 30"><path d="M1,3 H27 M1,1 V5 M27,1 V5" stroke="#1ec85c" stroke-width="2"/><rect x="1.5" y="8" width="25" height="4.5" rx="2.2" fill="none" stroke="#ffffff" stroke-width="1.8"/><rect x="1.5" y="15" width="25" height="4.5" rx="2.2" fill="none" stroke="#ffffff" stroke-width="1.8"/><rect x="1.5" y="22" width="25" height="4.5" rx="2.2" fill="none" stroke="#ffffff" stroke-width="1.8"/></svg>
<div class="t" style="left:2000.0px;top:473.6px;font-size:20.6px;line-height:20.6px;color:#fff;font-weight:700;">Breite der Linie</div>
<div class="r" style="left:2157px;top:483.5px;width:361px;height:1.5px;background:#5c5c5f;"></div>
<svg class="s" style="left:1966px;top:839px;" width="30" height="30" viewBox="0 0 30 30"><rect x="1.5" y="1.5" width="26" height="26" rx="2" fill="none" stroke="#ffffff" stroke-width="2"/><path d="M11,4 L17,7 L11,10 L17,13 L11,16 L17,19 L11,22 L17,25" fill="none" stroke="#1ec85c" stroke-width="2"/></svg>
<div class="t" style="left:2000.0px;top:843.7px;font-size:20.4px;line-height:20.4px;color:#fff;font-weight:700;">Naht</div>
<div class="r" style="left:2052px;top:853.5px;width:466px;height:1.5px;background:#5c5c5f;"></div>
<div class="t" style="left:1997.0px;top:393.5px;font-size:20.7px;line-height:20.7px;color:#c4c4c6;font-weight:400;">Schichthöhe</div>
<div class="r" style="left:2330px;top:388.0px;width:182px;height:31.0px;background:transparent;border:1px solid #5d5d60;border-radius:3px;"></div>
<div class="t" style="left:2338.0px;top:393.9px;font-size:20.2px;line-height:20.2px;color:#ffffff;font-weight:400;">0,2</div>
<div class="t" style="left:2471.0px;top:394.5px;font-size:19.5px;line-height:19.5px;color:#8d8d90;font-weight:400;">mm</div>
<div class="t" style="left:1997.0px;top:434.5px;font-size:20.7px;line-height:20.7px;color:#c4c4c6;font-weight:400;">Höhe der ersten Schicht</div>
<div class="r" style="left:2330px;top:429.0px;width:182px;height:31.0px;background:transparent;border:1px solid #5d5d60;border-radius:3px;"></div>
<div class="t" style="left:2338.0px;top:434.9px;font-size:20.2px;line-height:20.2px;color:#ffffff;font-weight:400;">0,2</div>
<div class="t" style="left:2471.0px;top:435.5px;font-size:19.5px;line-height:19.5px;color:#8d8d90;font-weight:400;">mm</div>
<div class="t" style="left:1997.0px;top:512.5px;font-size:20.7px;line-height:20.7px;color:#c4c4c6;font-weight:400;">Standard</div>
<div class="r" style="left:2330px;top:507.0px;width:182px;height:31.0px;background:transparent;border:1px solid #5d5d60;border-radius:3px;"></div>
<div class="t" style="left:2338.0px;top:512.9px;font-size:20.2px;line-height:20.2px;color:#ffffff;font-weight:400;">0,45</div>
<div class="t" style="left:2428.0px;top:514.3px;font-size:18.5px;line-height:18.5px;color:#8d8d90;font-weight:400;">mm or %</div>
<div class="t" style="left:1997.0px;top:554.5px;font-size:20.7px;line-height:20.7px;color:#c4c4c6;font-weight:400;">Erste Schicht</div>
<div class="r" style="left:2330px;top:549.0px;width:182px;height:31.0px;background:transparent;border:1px solid #5d5d60;border-radius:3px;"></div>
<div class="t" style="left:2338.0px;top:554.9px;font-size:20.2px;line-height:20.2px;color:#ffffff;font-weight:400;">0,5</div>
<div class="t" style="left:2428.0px;top:556.3px;font-size:18.5px;line-height:18.5px;color:#8d8d90;font-weight:400;">mm or %</div>
<div class="t" style="left:1997.0px;top:596.5px;font-size:20.7px;line-height:20.7px;color:#c4c4c6;font-weight:400;">Außenwand</div>
<div class="r" style="left:2330px;top:591.0px;width:182px;height:31.0px;background:transparent;border:1px solid #5d5d60;border-radius:3px;"></div>
<div class="t" style="left:2338.0px;top:596.9px;font-size:20.2px;line-height:20.2px;color:#ffffff;font-weight:400;">0,42</div>
<div class="t" style="left:2428.0px;top:598.3px;font-size:18.5px;line-height:18.5px;color:#8d8d90;font-weight:400;">mm or %</div>
<div class="t" style="left:1997.0px;top:638.5px;font-size:20.7px;line-height:20.7px;color:#c4c4c6;font-weight:400;">Innere Wand</div>
<div class="r" style="left:2330px;top:633.0px;width:182px;height:31.0px;background:transparent;border:1px solid #5d5d60;border-radius:3px;"></div>
<div class="t" style="left:2338.0px;top:638.9px;font-size:20.2px;line-height:20.2px;color:#ffffff;font-weight:400;">0,45</div>
<div class="t" style="left:2428.0px;top:640.3px;font-size:18.5px;line-height:18.5px;color:#8d8d90;font-weight:400;">mm or %</div>
<div class="t" style="left:1997.0px;top:680.0px;font-size:20.7px;line-height:20.7px;color:#c4c4c6;font-weight:400;">Obere Oberfläche</div>
<div class="r" style="left:2330px;top:674.5px;width:182px;height:31.0px;background:transparent;border:1px solid #5d5d60;border-radius:3px;"></div>
<div class="t" style="left:2338.0px;top:680.4px;font-size:20.2px;line-height:20.2px;color:#ffffff;font-weight:400;">0,42</div>
<div class="t" style="left:2428.0px;top:681.8px;font-size:18.5px;line-height:18.5px;color:#8d8d90;font-weight:400;">mm or %</div>
<div class="t" style="left:1997.0px;top:721.7px;font-size:20.7px;line-height:20.7px;color:#c4c4c6;font-weight:400;">Füllung</div>
<div class="r" style="left:2330px;top:716.2px;width:182px;height:31.0px;background:transparent;border:1px solid #5d5d60;border-radius:3px;"></div>
<div class="t" style="left:2338.0px;top:722.1px;font-size:20.2px;line-height:20.2px;color:#ffffff;font-weight:400;">0,45</div>
<div class="t" style="left:2428.0px;top:723.5px;font-size:18.5px;line-height:18.5px;color:#8d8d90;font-weight:400;">mm or %</div>
<div class="t" style="left:1997.0px;top:763.0px;font-size:20.7px;line-height:20.7px;color:#c4c4c6;font-weight:400;">Innere massive Füllung</div>
<div class="r" style="left:2330px;top:757.5px;width:182px;height:31.0px;background:transparent;border:1px solid #5d5d60;border-radius:3px;"></div>
<div class="t" style="left:2338.0px;top:763.4px;font-size:20.2px;line-height:20.2px;color:#ffffff;font-weight:400;">0,42</div>
<div class="t" style="left:2428.0px;top:764.8px;font-size:18.5px;line-height:18.5px;color:#8d8d90;font-weight:400;">mm or %</div>
<div class="t" style="left:1997.0px;top:805.0px;font-size:20.7px;line-height:20.7px;color:#c4c4c6;font-weight:400;">Stützen</div>
<div class="r" style="left:2330px;top:799.5px;width:182px;height:31.0px;background:transparent;border:1px solid #5d5d60;border-radius:3px;"></div>
<div class="t" style="left:2338.0px;top:805.4px;font-size:20.2px;line-height:20.2px;color:#ffffff;font-weight:400;">0,42</div>
<div class="t" style="left:2428.0px;top:806.8px;font-size:18.5px;line-height:18.5px;color:#8d8d90;font-weight:400;">mm or %</div>
<div class="t" style="left:1997.0px;top:883.5px;font-size:20.7px;line-height:20.7px;color:#c4c4c6;font-weight:400;">Nahtposition</div>
<div class="r" style="left:2330px;top:878.5px;width:182px;height:31.0px;background:transparent;border:1px solid #5d5d60;border-radius:3px;"></div>
<svg class="s" style="left:2334px;top:888px;" width="18" height="12" viewBox="0 0 18 12"><path d="M2,3 L9,9 L16,3" fill="none" stroke="#b8b8b8" stroke-width="1.4"/></svg>
<div class="t" style="left:2359.0px;top:883.2px;font-size:21px;line-height:21px;color:#ffffff;font-weight:400;">Ausgerichtet</div>
<div class="t" style="left:1997.0px;top:924.7px;font-size:21px;line-height:21px;color:#c4c4c6;font-weight:400;">Versetzte innere Nähte</div>
<div class="r" style="left:2330px;top:921px;width:28px;height:28px;background:#1ec85c;border-radius:5px;"></div>
<svg class="s" style="left:2330px;top:921px;" width="28" height="28" viewBox="0 0 28 28"><path d="M6,14.5 L12,20 L22,8.5" fill="none" stroke="#ffffff" stroke-width="3.2"/></svg>
<div class="t" style="left:1997.0px;top:967.0px;font-size:20.7px;line-height:20.7px;color:#c4c4c6;font-weight:400;">Naht Zwischenraum</div>
<div class="r" style="left:2330px;top:961.5px;width:182px;height:31.0px;background:transparent;border:1px solid #5d5d60;border-radius:3px;"></div>
<div class="t" style="left:2339.0px;top:967.4px;font-size:20.2px;line-height:20.2px;color:#ffffff;font-weight:400;">10%</div>
<div class="t" style="left:2428.0px;top:968.8px;font-size:18.5px;line-height:18.5px;color:#8d8d90;font-weight:400;">mm or %</div>
<div style="position:absolute;left:1965px;top:995px;width:553px;height:31px;overflow:hidden"><div class="t" style="left:32.0px;top:13.5px;font-size:20.7px;line-height:20.7px;color:#c4c4c6;font-weight:400;">Schrägnaht (Beta)</div>
<div class="r" style="left:365px;top:8px;width:182px;height:31px;background:transparent;border:1px solid #5d5d60;border-radius:3px;"></div>
<svg class="s" style="left:369px;top:17px;" width="18" height="12" viewBox="0 0 18 12"><path d="M2,3 L9,9 L16,3" fill="none" stroke="#b8b8b8" stroke-width="1.4"/></svg>
<div class="t" style="left:394.0px;top:13.2px;font-size:21px;line-height:21px;color:#ffffff;font-weight:400;">Keine</div>
</div>
<div class="r" style="left:1950px;top:1122px;width:608px;height:190px;background:#38383b;border-radius:6px;"></div>
<svg class="s" style="left:2538px;top:1136px;" width="18" height="22" viewBox="0 0 18 22"><path d="M3,3 L9,8 L15,3 M3,12 L9,17 L15,12" fill="none" stroke="#ffffff" stroke-width="2"/></svg>
<div style="position:absolute;left:0;top:0;width:2560px;height:1439px;pointer-events:none"><svg class="s" style="left:0;top:0" width="2560" height="1439" viewBox="0 0 2560 1439"><defs><clipPath id="pcl"><rect x="1950" y="1122" width="608" height="186"/></clipPath></defs><g clip-path="url(#pcl)"><path d="M2158,1236 Q2158,1230 2164,1227 L2248,1183 Q2254.5,1179 2261,1183 L2345,1228 Q2351,1231 2351,1237 L2351,1308 L2158,1308 Z" fill="#545457"/><path d="M2257.6,1289 L2351,1235 V1308 H2257.6 Z" fill="#4c4c4f"/><path d="M2164,1232 Q2156,1228 2164,1224 L2248,1182 Q2254.5,1178 2261,1182 L2345,1226 Q2353,1231 2345,1235 L2264,1286 Q2257.6,1290 2251,1286 Z" fill="#5b5b5e"/><path d="M2257.6,1289 V1308" stroke="#3e3e41" stroke-width="1.5"/><path d="M2158,1239 L2257.6,1296 L2351,1242" fill="none" stroke="#48484b" stroke-width="1.6"/><path d="M2158,1246 L2257.6,1303 L2351,1249" fill="none" stroke="#48484b" stroke-width="1.6"/><path d="M2158,1253 L2257.6,1310 L2351,1256" fill="none" stroke="#48484b" stroke-width="1.6"/><path d="M2158,1260 L2257.6,1317 L2351,1263" fill="none" stroke="#48484b" stroke-width="1.6"/><path d="M2158,1267 L2257.6,1324 L2351,1270" fill="none" stroke="#48484b" stroke-width="1.6"/><path d="M2158,1274 L2257.6,1331 L2351,1277" fill="none" stroke="#48484b" stroke-width="1.6"/><path d="M2158,1281 L2257.6,1338 L2351,1284" fill="none" stroke="#48484b" stroke-width="1.6"/></g></svg></div><div class="r" style="left:1598px;top:1186px;width:333px;height:170px;background:#323235;border-radius:8px;"></div>
<div class="r" style="left:1614px;top:1202px;width:233px;height:54.5px;background:#1ec85c;border-radius:4px;"></div>
<div class="t" style="left:1633.0px;top:1220.6px;font-size:19.4px;line-height:19.4px;color:#fff;font-weight:700;">Aktuelle Platte slicen</div>
<div class="r" style="left:1854px;top:1202px;width:54px;height:54.5px;background:#59595c;border-radius:4px;"></div>
<div class="t" style="left:1874.0px;top:1220.6px;font-size:17px;line-height:17px;color:#fff;font-weight:700;">^</div>
<div class="r" style="left:1614px;top:1287.5px;width:233px;height:54.0px;background:#59595c;border-radius:4px;"></div>
<div class="t" style="left:1655.4px;top:1305.7px;font-size:19.2px;line-height:19.2px;color:#fff;font-weight:700;">Drucken senden</div>
<div class="r" style="left:1854px;top:1287.5px;width:54px;height:54.0px;background:#59595c;border-radius:4px;"></div>
<div class="t" style="left:1874.0px;top:1305.6px;font-size:17px;line-height:17px;color:#fff;font-weight:700;">^</div>
<svg class="s" style="left:989px;top:1385px;" width="36" height="36" viewBox="0 0 36 36"><defs><linearGradient id="wg" x1="0" y1="0" x2="1" y2="1"><stop offset="0" stop-color="#7fd4ff"/><stop offset="1" stop-color="#1a9af0"/></linearGradient></defs><rect x="0" y="0" width="17" height="17" rx="1.5" fill="url(#wg)"/><rect x="19" y="0" width="17" height="17" rx="1.5" fill="url(#wg)"/><rect x="0" y="19" width="17" height="17" rx="1.5" fill="url(#wg)"/><rect x="19" y="19" width="17" height="17" rx="1.5" fill="url(#wg)"/></svg>
<svg class="s" style="left:1057px;top:1385px;" width="40" height="36" viewBox="0 0 40 36"><rect x="0" y="10" width="28" height="26" rx="3" fill="#6e6e70"/><rect x="10" y="0" width="29" height="26" rx="3" fill="#efefef"/><rect x="10" y="10" width="18" height="16" fill="#b0b0b2"/></svg>
<svg class="s" style="left:1126px;top:1385px;" width="39" height="36" viewBox="0 0 38 36"><path d="M0,3 Q0,0 3,0 H13 L16,4 H36 Q38,4 38,7 V36 H0 Z" fill="#e8b328"/><rect x="0" y="7" width="38" height="29" rx="1" fill="#f9d45b"/><path d="M8,36 V27 Q8,24 11,24 H27 Q30,24 30,27 V36 Z" fill="#1a78d4"/><rect x="11" y="28" width="16" height="2" fill="#0d5aa8"/></svg>
<svg class="s" style="left:1195px;top:1384px;" width="38" height="38" viewBox="0 0 37 38"><rect x="0" y="8" width="37" height="30" rx="4" fill="#f3f3f3"/><path d="M10,10 V5 Q10,1 14,1 H23 Q27,1 27,5 V10" fill="none" stroke="#2ea7e8" stroke-width="3"/><rect x="10" y="14" width="7.5" height="7.5" fill="#f25022"/><rect x="19.5" y="14" width="7.5" height="7.5" fill="#7fba00"/><rect x="10" y="23.5" width="7.5" height="7.5" fill="#00a4ef"/><rect x="19.5" y="23.5" width="7.5" height="7.5" fill="#ffb900"/></svg>
<svg class="s" style="left:1263px;top:1384px;" width="38" height="38" viewBox="0 0 38 38"><circle cx="19" cy="19" r="18.5" fill="#ea4335"/><path d="M19,19 L35.5,10.5 A18.5,18.5 0 0,1 19,37.5 Z" fill="#fbbc04"/><path d="M19,19 L19,37.5 A18.5,18.5 0 0,1 2.5,10 Z" fill="#34a853"/><circle cx="19" cy="19" r="8.5" fill="#fff"/><circle cx="19" cy="19" r="6.5" fill="#4285f4"/></svg>
<svg class="s" style="left:1332px;top:1384px;" width="39" height="38" viewBox="0 0 38 38"><rect x="0" y="0" width="38" height="38" rx="8" fill="#0dbb3f"/><path d="M10,8 H17 V30 H10 Z M21,8 H28 V30 H21 Z" fill="#fff"/><path d="M10,18 L17,16 M21,21 L28,19" stroke="#0dbb3f" stroke-width="1.6"/></svg>
<svg class="s" style="left:1401px;top:1384px;" width="38" height="38" viewBox="0 0 38 38"><circle cx="19" cy="19" r="18.5" fill="#fff"/><circle cx="19" cy="19" r="16" fill="#d32a2a"/><path d="M21,6 L12,21 H18 L15,32 L26,16 H20 Z" fill="#fff"/></svg>
<svg class="s" style="left:1535px;top:1382px;" width="42" height="42" viewBox="0 0 42 42"><defs><linearGradient id="lg2" x1="0" y1="0" x2="0" y2="1"><stop offset="0" stop-color="#2a9a4c"/><stop offset="0.35" stop-color="#5aa844"/><stop offset="0.7" stop-color="#8cbb3a"/><stop offset="1" stop-color="#92c03f"/></linearGradient></defs><path fill="url(#lg2)" fill-rule="evenodd" d="M21,2 L40,37 Q30,31.5 21,31.5 Q12,31.5 2,37 Z M21,12.5 L28.8,26.5 Q24.5,24.5 21,24.5 Q17.5,24.5 13.4,26.2 Z"/></svg>
<div class="r" style="left:1140.5px;top:1428px;width:10.0px;height:3.5px;background:#9aa0aa;border-radius:2px;"></div>
<div class="r" style="left:1277.5px;top:1428px;width:10.0px;height:3.5px;background:#9aa0aa;border-radius:2px;"></div>
<div class="r" style="left:1346px;top:1428px;width:10px;height:3.5px;background:#9aa0aa;border-radius:2px;"></div>
<div class="r" style="left:1414.5px;top:1428px;width:10.0px;height:3.5px;background:#9aa0aa;border-radius:2px;"></div>
<div class="r" style="left:1551px;top:1428px;width:10px;height:3.5px;background:#9aa0aa;border-radius:2px;"></div>
<svg class="s" style="left:2268px;top:1393px;" width="24" height="17" viewBox="0 0 24 17"><path d="M3,14 L12,5 L21,14" fill="none" stroke="#ffffff" stroke-width="2"/></svg>
<svg class="s" style="left:2314px;top:1390px;" width="30" height="24" viewBox="0 0 30 24"><path d="M2,9 Q15,-2 28,9 M6,13 Q15,5 24,13 M10,17 Q15,13 20,17" fill="none" stroke="#ffffff" stroke-width="2.2" stroke-linecap="round"/><circle cx="15" cy="21" r="2" fill="#ffffff"/></svg>
<svg class="s" style="left:2352px;top:1391px;" width="28" height="22" viewBox="0 0 28 22"><path d="M2,8 H7 L14,2 V20 L7,14 H2 Z" fill="none" stroke="#ffffff" stroke-width="1.8"/><path d="M17,7 Q20,11 17,15" fill="none" stroke="#ffffff" stroke-width="1.8"/><path d="M21,4 Q26,11 21,18" fill="none" stroke="#888" stroke-width="1.8"/></svg>
<svg class="s" style="left:2389px;top:1389px;" width="30" height="24" viewBox="0 0 30 24"><rect x="2" y="8" width="22" height="13" rx="2.5" fill="none" stroke="#ffffff" stroke-width="2"/><rect x="25" y="12" width="3" height="5" fill="#ffffff"/><path d="M10,2 L6,10 H11 L8,17" fill="none" stroke="#ffffff" stroke-width="1.6"/></svg>
<div class="t" style="left:2487.0px;top:1380.8px;font-size:17.9px;line-height:17.9px;color:#fff;font-weight:400;">15:47</div>
<div class="t" style="left:2441.0px;top:1405.8px;font-size:17.98px;line-height:17.98px;color:#fff;font-weight:400;">19.04.2025</div>
</body></html>
